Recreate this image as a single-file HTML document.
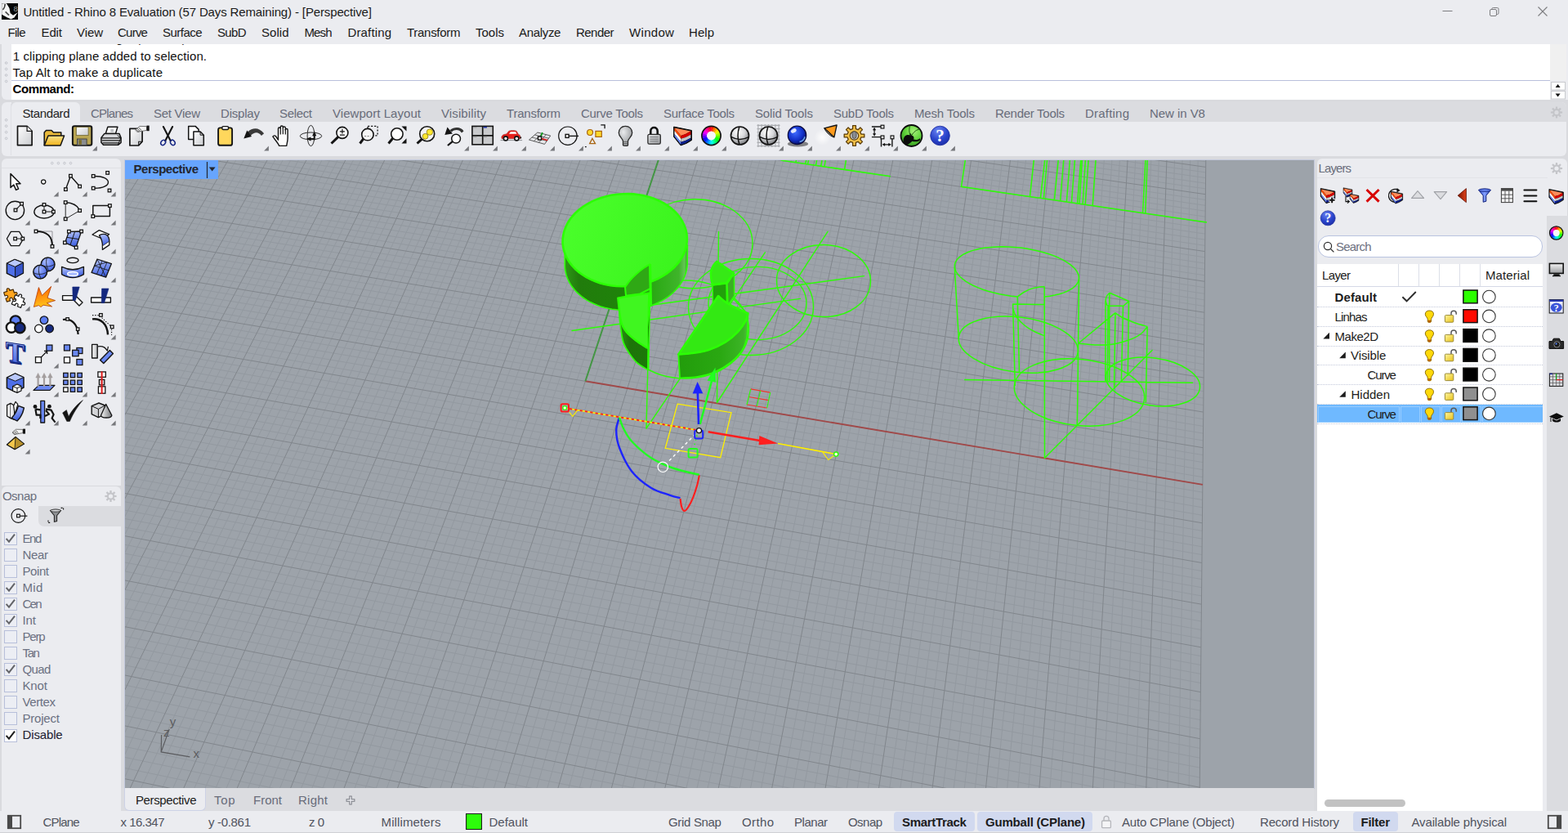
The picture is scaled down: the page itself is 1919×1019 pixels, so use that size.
<!DOCTYPE html>
<html lang="en"><head><meta charset="utf-8"><title>Untitled - Rhino 8 Evaluation (57 Days Remaining) - [Perspective]</title>
<style>
html,body{margin:0;padding:0;}
body{width:1919px;height:1019px;overflow:hidden;background:#d9dade;font-family:"Liberation Sans",sans-serif;}
#app{position:relative;width:1919px;height:1019px;overflow:hidden;background:#d9dade;}
.t{position:absolute;white-space:pre;line-height:20px;height:20px;font-size:15px;color:#1b1b1f;}
.p{position:absolute;}
.light{background:#ebecf0;}
svg{position:absolute;overflow:visible;}
svg text{font-family:"Liberation Sans",sans-serif;}

</style></head>
<body>
<div id="app">
<header>
<div class="p" style="left:0px;top:0px;width:1919px;height:54px;background:#ebecf0;"></div>
<span class="t " style="left:28.40px;top:5.00px;font-size:15px;letter-spacing:-0.135px;color:#1a1a1a;">Untitled - Rhino 8 Evaluation (57 Days Remaining) - [Perspective]</span><nav><span class="t " style="left:9.50px;top:30.00px;font-size:15px;letter-spacing:-0.717px;color:#1a1a1a;">File</span><span class="t " style="left:50.50px;top:30.00px;font-size:15px;letter-spacing:-0.125px;color:#1a1a1a;">Edit</span><span class="t " style="left:94.00px;top:30.00px;font-size:15px;letter-spacing:-0.083px;color:#1a1a1a;">View</span><span class="t " style="left:144.00px;top:30.00px;font-size:15px;letter-spacing:-0.762px;color:#1a1a1a;">Curve</span><span class="t " style="left:199.00px;top:30.00px;font-size:15px;letter-spacing:-0.529px;color:#1a1a1a;">Surface</span><span class="t " style="left:266.00px;top:30.00px;font-size:15px;letter-spacing:-0.667px;color:#1a1a1a;">SubD</span><span class="t " style="left:320.00px;top:30.00px;font-size:15px;letter-spacing:0.031px;color:#1a1a1a;">Solid</span><span class="t " style="left:372.50px;top:30.00px;font-size:15px;letter-spacing:-0.892px;color:#1a1a1a;">Mesh</span><span class="t " style="left:425.50px;top:30.00px;font-size:15px;letter-spacing:0.143px;color:#1a1a1a;">Drafting</span><span class="t " style="left:498.00px;top:30.00px;font-size:15px;letter-spacing:-0.287px;color:#1a1a1a;">Transform</span><span class="t " style="left:582.00px;top:30.00px;font-size:15px;letter-spacing:-0.006px;color:#1a1a1a;">Tools</span><span class="t " style="left:635.00px;top:30.00px;font-size:15px;letter-spacing:-0.317px;color:#1a1a1a;">Analyze</span><span class="t " style="left:705.00px;top:30.00px;font-size:15px;letter-spacing:-0.540px;color:#1a1a1a;">Render</span><span class="t " style="left:770.00px;top:30.00px;font-size:15px;letter-spacing:0.320px;color:#1a1a1a;">Window</span><span class="t " style="left:843.00px;top:30.00px;font-size:15px;letter-spacing:0.058px;color:#1a1a1a;">Help</span></nav>
</header>
<section id="cmd">
<div class="p" style="left:2px;top:54px;width:1917px;height:68px;background:#ebecf0;border-radius:0 0 0 6px;"></div>
<div class="p" style="left:14px;top:54px;width:1883px;height:68px;background:#fff;overflow:hidden;"><span class="t" style="left:2px;top:-17px;color:#111;">Other corner or length ( 3Point ):</span></div>
<div class="p" style="left:14px;top:98px;width:1883px;height:1px;background:#b9c0dc;"></div>
<span class="t " style="left:15.80px;top:59.00px;font-size:15px;letter-spacing:0.081px;color:#111;">1 clipping plane added to selection.</span><span class="t " style="left:15.50px;top:79.00px;font-size:15px;letter-spacing:0.163px;color:#111;">Tap Alt to make a duplicate</span><span class="t " style="left:15.50px;top:99.00px;font-size:15px;letter-spacing:-0.400px;color:#000;font-weight:700;">Command:</span></section>
<section id="toolbar">
<div class="p" style="left:2px;top:125px;width:1915px;height:66px;background:#ebecf0;border-radius:6px;"></div>
<div class="p" style="left:14px;top:125px;width:1903px;height:24px;background:#dbdce0;border-radius:0 6px 0 0;"></div>
<div class="p" style="left:14px;top:125px;width:84px;height:25px;background:#ebecf0;border-radius:6px 6px 0 0;"></div>
<span class="t " style="left:27.50px;top:129.00px;font-size:15px;letter-spacing:-0.414px;color:#1f1f24;">Standard</span><span class="t " style="left:111.00px;top:129.00px;font-size:15px;letter-spacing:-0.783px;color:#686c7a;">CPlanes</span><span class="t " style="left:188.00px;top:129.00px;font-size:15px;letter-spacing:-0.279px;color:#686c7a;">Set View</span><span class="t " style="left:270.00px;top:129.00px;font-size:15px;letter-spacing:-0.200px;color:#686c7a;">Display</span><span class="t " style="left:342.00px;top:129.00px;font-size:15px;letter-spacing:-0.340px;color:#686c7a;">Select</span><span class="t " style="left:407.00px;top:129.00px;font-size:15px;letter-spacing:0.048px;color:#686c7a;">Viewport Layout</span><span class="t " style="left:540.00px;top:129.00px;font-size:15px;letter-spacing:0.119px;color:#686c7a;">Visibility</span><span class="t " style="left:620.00px;top:129.00px;font-size:15px;letter-spacing:-0.225px;color:#686c7a;">Transform</span><span class="t " style="left:711.00px;top:129.00px;font-size:15px;letter-spacing:-0.290px;color:#686c7a;">Curve Tools</span><span class="t " style="left:812.00px;top:129.00px;font-size:15px;letter-spacing:-0.300px;color:#686c7a;">Surface Tools</span><span class="t " style="left:924.00px;top:129.00px;font-size:15px;letter-spacing:-0.130px;color:#686c7a;">Solid Tools</span><span class="t " style="left:1020.00px;top:129.00px;font-size:15px;letter-spacing:-0.269px;color:#686c7a;">SubD Tools</span><span class="t " style="left:1119.00px;top:129.00px;font-size:15px;letter-spacing:-0.178px;color:#686c7a;">Mesh Tools</span><span class="t " style="left:1218.00px;top:129.00px;font-size:15px;letter-spacing:-0.284px;color:#686c7a;">Render Tools</span><span class="t " style="left:1328.00px;top:129.00px;font-size:15px;letter-spacing:0.214px;color:#686c7a;">Drafting</span><span class="t " style="left:1407.00px;top:129.00px;font-size:15px;letter-spacing:-0.050px;color:#686c7a;">New in V8</span><svg style="left:0;top:150px" width="1200" height="40" viewBox="0 150 1200 40"><defs><linearGradient id="gpaper" x1="0" y1="0" x2="1" y2="1"><stop offset="0" stop-color="#fff"/><stop offset="1" stop-color="#c9cbcf"/></linearGradient><linearGradient id="gfold" x1="0" y1="0" x2="0" y2="1"><stop offset="0" stop-color="#fbe48c"/><stop offset="1" stop-color="#f0b21a"/></linearGradient><radialGradient id="gbulb" cx=".35" cy=".3" r=".8"><stop offset="0" stop-color="#e9eaec"/><stop offset="1" stop-color="#8f9295"/></radialGradient><linearGradient id="glock" x1="0" y1="0" x2="1" y2="1"><stop offset="0" stop-color="#e4e5e7"/><stop offset="1" stop-color="#9b9da1"/></linearGradient><radialGradient id="gsph" cx=".4" cy=".3" r=".75"><stop offset="0" stop-color="#fff"/><stop offset=".5" stop-color="#d6d7da"/><stop offset="1" stop-color="#6f7175"/></radialGradient><radialGradient id="gblue" cx=".4" cy=".35" r=".7"><stop offset="0" stop-color="#3f6bff"/><stop offset=".6" stop-color="#1230c8"/><stop offset="1" stop-color="#050a58"/></radialGradient><radialGradient id="gglow" cx=".5" cy=".5" r=".5"><stop offset="0" stop-color="#fff" stop-opacity=".9"/><stop offset="1" stop-color="#fff" stop-opacity="0"/></radialGradient><radialGradient id="ggreen" cx=".6" cy=".3" r=".8"><stop offset="0" stop-color="#a6f07a"/><stop offset=".5" stop-color="#5fd23a"/><stop offset="1" stop-color="#2a8a1a"/></radialGradient><radialGradient id="ghelp" cx=".4" cy=".25" r=".85"><stop offset="0" stop-color="#6d86f2"/><stop offset=".55" stop-color="#2a44cc"/><stop offset="1" stop-color="#1a2aa0"/></radialGradient></defs><g transform="translate(30.5 166)"><path d="M-9 -11.6H2.6L8.6 -5.6V11.6H-9Z" fill="url(#gpaper)" stroke="#141414" stroke-width="1.7" stroke-linejoin="round"/><path d="M2.6 -11.6V-5.6H8.6" fill="#fff" stroke="#141414" stroke-width="1.2"/></g>
<g transform="translate(65.5 166)"><g transform="translate(0.5 1.5)"><path d="M-11.8 10.5V-5.5L-9.5 -8H-3L-0.5 -5.5H8.8V-1.5" fill="#e8b93a" stroke="#141414" stroke-width="1.5" stroke-linejoin="round"/><path d="M-11.8 10.5L-7 -1.5H12.6L8 10.5Z" fill="url(#gfold)" stroke="#141414" stroke-width="1.5" stroke-linejoin="round"/></g></g>
<g transform="translate(100.5 166)"><rect x="-11.6" y="-11.8" width="23.4" height="23.6" rx="2.3" fill="#b9a552" stroke="#141414" stroke-width="2"/><rect x="-7.2" y="-10.6" width="14.8" height="10.2" fill="url(#gpaper)" stroke="#6d6434" stroke-width=".8"/><rect x="-6" y="4" width="11.6" height="7.6" fill="#8a8d90" stroke="#3a3a3a" stroke-width=".9"/><rect x="-4.2" y="5.2" width="3.6" height="5.6" fill="#80702c"/><path d="M12.6 18.4H18.4V12.6Z" fill="#77787c"/></g>
<g transform="translate(135.5 166)"><path d="M-6.2 -2.6L-3.6 -10.8H8.4L6 -2.6Z" fill="#fff" stroke="#141414" stroke-width="1.5" stroke-linejoin="round"/><rect x="-0.2" y="-8" width="3.8" height="3.6" fill="#bfc2c6"/><path d="M-11.6 2.5L-7.6 -2.6H10.4L12.6 2.5V8.3L9 11.3H-9L-11.6 8.3Z" fill="#d9dadd" stroke="#141414" stroke-width="1.5" stroke-linejoin="round"/><path d="M-11.4 2.8H12.4M-10.6 5.9H11.8M-10 8.8H10.8" stroke="#141414" stroke-width="1.2" fill="none"/><path d="M8.2 -0.4L12.4 2.6L9 11" stroke="#141414" stroke-width="1" fill="none"/></g>
<g transform="translate(170.5 166)"><path d="M-11.6 -8.6H3.6V7.2L-0.8 12H-11.6Z" fill="url(#gpaper)" stroke="#141414" stroke-width="1.7" stroke-linejoin="round"/><path d="M3.4 7.2H-0.8V11.8" fill="none" stroke="#141414" stroke-width="1.1"/><path d="M-5 -7L0.5 -11.6L9 -11.4V-6.6L2 -5.4L-2.5 -4.6Z" fill="#f4f4f4" stroke="#555" stroke-width=".8"/><path d="M-4 -7.4L-0.5 -4.6M-2.4 -8.6L1.2 -5.2M-0.8 -9.8L2.8 -6.4" stroke="#444" stroke-width=".9"/><rect x="9" y="-12.4" width="3.2" height="6.6" fill="#141414"/></g>
<g transform="translate(205.5 166)"><path d="M-5.6 -11L3.4 6.4M5.6 -11L-3.4 6.4" stroke="#141414" stroke-width="2.1" stroke-linecap="round"/><ellipse cx="-5.8" cy="8.4" rx="2.6" ry="3.4" transform="rotate(38 -5.8 8.4)" fill="none" stroke="#1a2a86" stroke-width="1.5"/><ellipse cx="5.8" cy="8.4" rx="2.6" ry="3.4" transform="rotate(-38 5.8 8.4)" fill="none" stroke="#1a2a86" stroke-width="1.5"/></g>
<g transform="translate(240.5 166)"><path d="M-9.8 -11.6H-1.4L2.6 -7.6V4.6H-9.8Z" fill="#fff" stroke="#141414" stroke-width="1.5" stroke-linejoin="round"/><path d="M-3.6 -5H4.6L8.8 -0.8V11.8H-3.6Z" fill="url(#gpaper)" stroke="#141414" stroke-width="1.5" stroke-linejoin="round"/><path d="M4.6 -5V-0.8H8.8" fill="none" stroke="#141414" stroke-width="1"/></g>
<g transform="translate(275.5 166)"><rect x="-8.4" y="-9.6" width="17" height="21.4" rx="2.4" fill="#ffd75c" stroke="#141414" stroke-width="1.9"/><rect x="-3.6" y="-11.4" width="7.6" height="3.9" rx="1.2" fill="#fff" stroke="#141414" stroke-width="1.4"/></g>
<g transform="translate(310.5 166)"><g transform="translate(0 -1)"><path d="M-7.6 -3.5Q3 -12.6 12.6 -1.8L9.4 0.9Q3.6 -6.4 -3.8 0.9Z" fill="#3a3a3a"/><path d="M-12.2 4.6L-8.2 -5.4L-2.5 2.1Z" fill="#141414"/></g><path d="M12.6 18.4H18.4V12.6Z" fill="#77787c"/></g>
<g transform="translate(345.5 166)"><path d="M-11.6 1.2C-10.6 -0.6 -8.8 -0.4 -7.8 1L-5 5.2V-8.4C-5 -10.6 -2.2 -10.6 -2.2 -8.4V-10.4C-2.2 -12.6 0.8 -12.6 0.8 -10.4V-9.4C0.8 -11.6 3.8 -11.6 3.8 -9.4V-7C3.8 -9 6.6 -9 6.6 -7V2.4C6.6 6 6 8 5.2 12.4H-3.8C-5.4 8.6 -9 4.8 -11.6 1.2Z" fill="#fdfdfd" stroke="#141414" stroke-width="1.4" stroke-linejoin="round"/><path d="M-2.2 -8V-1.6M0.8 -9.4V-1.8M3.8 -8V-1.4" stroke="#141414" stroke-width="1.2" fill="none"/></g>
<g transform="translate(380.5 166)"><ellipse cx="0" cy="0.4" rx="13.2" ry="4.4" fill="none" stroke="#2a2a2a" stroke-width="1"/><ellipse cx="0" cy="0" rx="4.4" ry="12.6" fill="none" stroke="#2a2a2a" stroke-width="1"/><path d="M4.2 -5.4L6.8 0.2H5.2V5.2H3.2V0.2H1.6Z" fill="#141414"/><path d="M-5.6 3.8L0 1.4V3H4.4V4.8H0V6.4Z" fill="#141414"/></g>
<g transform="translate(415.5 166)"><path d="M-1.4999999999999996 1.2999999999999994L-10 9.5" stroke="#141414" stroke-width="3" stroke-linecap="butt"/><circle cx="3.4" cy="-3.6" r="7" fill="#fff" stroke="#141414" stroke-width="1.6"/><path d="M0.4 -5.2H6.4M3.4 -8.2V-2.4M0.4 -0.8H6.4" stroke="#141414" stroke-width="1.2"/></g>
<g transform="translate(450.5 166)"><rect x="-0.4" y="-11.6" width="12" height="11.4" fill="none" stroke="#141414" stroke-width="1.3" stroke-dasharray="2.2 1.8"/><path d="M-5.64 3.64L-10 9.5" stroke="#141414" stroke-width="3" stroke-linecap="butt"/><circle cx="-0.6" cy="-1.4" r="7.2" fill="#f6f6f6" stroke="#141414" stroke-width="1.6"/><path d="M-4.4 0.6H3" stroke="#777" stroke-width="1" stroke-dasharray="2 1.5"/></g>
<g transform="translate(485.5 166)"><path d="M-4.64 3.04L-10 9.5" stroke="#141414" stroke-width="3" stroke-linecap="butt"/><circle cx="0.4" cy="-2" r="7.2" fill="#fff" stroke="#141414" stroke-width="1.6"/><path d="M6 -11.6H12V-5.6Z M12 3.2V9.4H6Z" fill="#141414"/><path d="M-12.6 -4.6L-12.6 -10.6L-7 -10.6" fill="none" stroke="#141414" stroke-width="0"/></g>
<g transform="translate(520.5 166)"><path d="M-4.1 4.1L-10 9.5" stroke="#141414" stroke-width="3" stroke-linecap="butt"/><circle cx="2.2" cy="-2.2" r="9" fill="#f3f3f3" stroke="#141414" stroke-width="1.6"/><circle cx="5.4" cy="-4.4" r="3.7" fill="#ffe92e" stroke="#8a7a12" stroke-width=".8"/><circle cx="0" cy="0.8" r="3.4" fill="#ffe92e" stroke="#8a7a12" stroke-width=".8"/></g>
<g transform="translate(555.5 166)"><path d="M-5 -6.8C1 -11.8 9.5 -10.6 12 -5.6L9.4 -3.6C7 -7.6 1 -8.2 -2.6 -4.6Z" fill="#333"/><path d="M-11.2 -1L-8 -10.6L-1.6 -2.4Z" fill="#141414"/><path d="M-1.4 6.8L-7.6 12" stroke="#141414" stroke-width="2.2"/><circle cx="2.6" cy="3.6" r="5.4" fill="#fff" stroke="#141414" stroke-width="1.5"/><path d="M12.6 18.4H18.4V12.6Z" fill="#77787c"/></g>
<g transform="translate(590.5 166)"><rect x="-12.6" y="-11.6" width="25.4" height="22.4" fill="#c9cacc" stroke="#141414" stroke-width="1.6"/><path d="M0.2 -11.6V10.8M-12.6 -0.2H12.8" stroke="#141414" stroke-width="1.7"/><path d="M1.2 -10.2H5.4" stroke="#1226a8" stroke-width="1.4"/><path d="M-11.2 -10.2H-7M-11.2 1.2H-7M1.2 1.2H5.4" stroke="#8a8a8a" stroke-width="1"/><path d="M12.6 18.4H18.4V12.6Z" fill="#77787c"/></g>
<g transform="translate(625.5 166)"><path d="M-13 5.6H13.6" stroke="#8f9094" stroke-width="1"/><path d="M-11.6 2.6C-11.8 -0.4 -9.4 -1.6 -5.6 -2L-2.8 -5.6C-1.8 -6.6 5.6 -6.6 6.6 -5.6L9 -1.6C10.8 -1.4 11.2 0.2 11.2 2.4V3.6H-11.4Z" fill="#e5201c" stroke="#9c1410" stroke-width=".6"/><path d="M-2.6 -2.2L-0.6 -4.8H5.4L7 -2.2Z" fill="#fff"/><circle cx="-6.6" cy="3.4" r="2.5" fill="#fff" stroke="#141414" stroke-width="1.6"/><circle cx="6.8" cy="3.4" r="2.5" fill="#fff" stroke="#141414" stroke-width="1.6"/><rect x="11" y="1.4" width="1.6" height="2" fill="#141414"/><path d="M12.6 18.4H18.4V12.6Z" fill="#77787c"/></g>
<g transform="translate(660.5 166)"><g transform="translate(0 2)"><path d="M-13 3L-2.6 -6L13.2 -2L6 8.4Z" fill="#e6e7ea" stroke="#4a4a4a" stroke-width=".9"/><path d="M-9.6 0L8.8 4.4M-6 -3L11 1.2M-7.4 5L3 -4.6M-1.4 6.6L8 -3.4" stroke="#4a4a4a" stroke-width=".8" fill="none"/><path d="M0.4 1L3.4 -5.8" stroke="#0e9e1c" stroke-width="1.8"/><path d="M0.4 1L9.6 3.6" stroke="#d81e1e" stroke-width="1.8"/><rect x="-2" y="-1" width="4" height="4" fill="#fff" stroke="#141414" stroke-width="1.4"/></g><path d="M12.6 18.4H18.4V12.6Z" fill="#77787c"/></g>
<g transform="translate(695.5 166)"><circle cx="-0.6" cy="0.2" r="11.2" fill="none" stroke="#141414" stroke-width="1.2"/><path d="M0.6 0.4H12.6" stroke="#141414" stroke-width="1.4"/><rect x="-3.4" y="-1.6" width="4" height="4" fill="#fff" stroke="#141414" stroke-width="1.4"/><path d="M12.6 18.4H18.4V12.6Z" fill="#77787c"/></g>
<g transform="translate(730.5 166)"><circle cx="-8.4" cy="-4" r="3.5" fill="#ffd92a" stroke="#a86412" stroke-width="1.2"/><rect x="-1.6" y="-5.6" width="7.4" height="7" fill="#ffd92a" stroke="#a86412" stroke-width="1.2"/><path d="M-8.8 9.6L-5.6 3.4L-2 9.6Z" fill="none" stroke="#a86412" stroke-width="1.3"/><path d="M4.8 -13.2H9.6V-8.8" fill="none" stroke="#141414" stroke-width="1.3"/><path d="M-14.6 13.6H-12.8" stroke="#141414" stroke-width="1.3"/><path d="M12.6 18.4H18.4V12.6Z" fill="#77787c"/></g>
<g transform="translate(765.5 166)"><path d="M-3 11.4V6.8C-3 3.6 -8.2 1 -8.2 -3.6C-8.2 -8.4 -4.6 -11.6 0 -11.6C4.6 -11.6 8.2 -8.4 8.2 -3.6C8.2 1 3 3.6 3 6.8V11.4C3 12.6 -3 12.6 -3 11.4Z" fill="url(#gbulb)" stroke="#2a2a2a" stroke-width="1.3"/><path d="M-2.8 7.4H2.8M-2.8 9.6H2.8" stroke="#555" stroke-width=".8"/><path d="M12.6 18.4H18.4V12.6Z" fill="#77787c"/></g>
<g transform="translate(800.5 166)"><path d="M-4.2 -1V-5.6C-4.2 -11.4 4.2 -11.4 4.2 -5.6V-1" fill="none" stroke="#141414" stroke-width="2.6"/><rect x="-7.6" y="-1.6" width="15.4" height="11.8" rx="1.6" fill="url(#glock)" stroke="#2a2a2a" stroke-width="1.3"/><path d="M-5 1.6H5M-5 4.2H5M-5 6.8H5" stroke="#77797c" stroke-width="1"/><path d="M12.6 18.4H18.4V12.6Z" fill="#77787c"/></g>
<g transform="translate(835.5 166)"><g transform="scale(1.0)"><path d="M-10.9 -10.9L11 -6.5V5.5Q5 10 -2.4 11.9L-10.9 1.3Z" fill="#0b0b0b" stroke="#0b0b0b" stroke-width="1" stroke-linejoin="round"/><path d="M-10 -9.5L9.9 -5.4Q4 -1.6 -2.1 -0.1Z" fill="#ff8c5a"/><path d="M-10 -9.5L-2.1 -0.1V3.8L-10 -6.1Z" fill="#ff4a00"/><path d="M-10 -6.1L-2.1 3.8V7.7L-10 -1.9Z" fill="#fff"/><path d="M-10 -1.9L-2.1 7.7V11L-10 0.8Z" fill="#6a8aff"/><path d="M-2.1 -0.1Q4 -1.6 9.9 -5.4V-1.2Q4 2.4 -2.1 3.8Z" fill="#d60000"/><path d="M-2.1 3.8Q4 2.4 9.9 -1.2V2.7Q4 6.2 -2.1 7.7Z" fill="#c2c3c5"/><path d="M-2.1 7.7Q4 6.2 9.9 2.7V5Q4 9.4 -2.1 11Z" fill="#0c1f8e"/></g><path d="M12.6 18.4H18.4V12.6Z" fill="#77787c"/></g>
<g transform="translate(870.5 166)"><path d="M-0.23 -11.40A11.4 11.4 0 0 1 3.17 -10.95L1.45 -4.99A5.2 5.2 0 0 0 -0.10 -5.20Z" fill="#ff1f00"/><path d="M2.73 -11.07A11.4 11.4 0 0 1 5.90 -9.76L2.69 -4.45A5.2 5.2 0 0 0 1.25 -5.05Z" fill="#ff5f00"/><path d="M5.50 -9.98A11.4 11.4 0 0 1 8.22 -7.90L3.75 -3.60A5.2 5.2 0 0 0 2.51 -4.55Z" fill="#ff9f00"/><path d="M7.90 -8.22A11.4 11.4 0 0 1 9.98 -5.50L4.55 -2.51A5.2 5.2 0 0 0 3.60 -3.75Z" fill="#ffdf00"/><path d="M9.76 -5.90A11.4 11.4 0 0 1 11.07 -2.73L5.05 -1.25A5.2 5.2 0 0 0 4.45 -2.69Z" fill="#dfff00"/><path d="M10.95 -3.17A11.4 11.4 0 0 1 11.40 0.23L5.20 0.10A5.2 5.2 0 0 0 4.99 -1.45Z" fill="#9fff00"/><path d="M11.40 -0.23A11.4 11.4 0 0 1 10.95 3.17L4.99 1.45A5.2 5.2 0 0 0 5.20 -0.10Z" fill="#5fff00"/><path d="M11.07 2.73A11.4 11.4 0 0 1 9.76 5.90L4.45 2.69A5.2 5.2 0 0 0 5.05 1.25Z" fill="#1fff00"/><path d="M9.98 5.50A11.4 11.4 0 0 1 7.90 8.22L3.60 3.75A5.2 5.2 0 0 0 4.55 2.51Z" fill="#00ff1f"/><path d="M8.22 7.90A11.4 11.4 0 0 1 5.50 9.98L2.51 4.55A5.2 5.2 0 0 0 3.75 3.60Z" fill="#00ff5f"/><path d="M5.90 9.76A11.4 11.4 0 0 1 2.73 11.07L1.25 5.05A5.2 5.2 0 0 0 2.69 4.45Z" fill="#00ff9f"/><path d="M3.17 10.95A11.4 11.4 0 0 1 -0.23 11.40L-0.10 5.20A5.2 5.2 0 0 0 1.45 4.99Z" fill="#00ffdf"/><path d="M0.23 11.40A11.4 11.4 0 0 1 -3.17 10.95L-1.45 4.99A5.2 5.2 0 0 0 0.10 5.20Z" fill="#00dfff"/><path d="M-2.73 11.07A11.4 11.4 0 0 1 -5.90 9.76L-2.69 4.45A5.2 5.2 0 0 0 -1.25 5.05Z" fill="#009fff"/><path d="M-5.50 9.98A11.4 11.4 0 0 1 -8.22 7.90L-3.75 3.60A5.2 5.2 0 0 0 -2.51 4.55Z" fill="#005fff"/><path d="M-7.90 8.22A11.4 11.4 0 0 1 -9.98 5.50L-4.55 2.51A5.2 5.2 0 0 0 -3.60 3.75Z" fill="#001fff"/><path d="M-9.76 5.90A11.4 11.4 0 0 1 -11.07 2.73L-5.05 1.25A5.2 5.2 0 0 0 -4.45 2.69Z" fill="#1f00ff"/><path d="M-10.95 3.17A11.4 11.4 0 0 1 -11.40 -0.23L-5.20 -0.10A5.2 5.2 0 0 0 -4.99 1.45Z" fill="#5f00ff"/><path d="M-11.40 0.23A11.4 11.4 0 0 1 -10.95 -3.17L-4.99 -1.45A5.2 5.2 0 0 0 -5.20 0.10Z" fill="#9f00ff"/><path d="M-11.07 -2.73A11.4 11.4 0 0 1 -9.76 -5.90L-4.45 -2.69A5.2 5.2 0 0 0 -5.05 -1.25Z" fill="#df00ff"/><path d="M-9.98 -5.50A11.4 11.4 0 0 1 -7.90 -8.22L-3.60 -3.75A5.2 5.2 0 0 0 -4.55 -2.51Z" fill="#ff00df"/><path d="M-8.22 -7.90A11.4 11.4 0 0 1 -5.50 -9.98L-2.51 -4.55A5.2 5.2 0 0 0 -3.75 -3.60Z" fill="#ff009f"/><path d="M-5.90 -9.76A11.4 11.4 0 0 1 -2.73 -11.07L-1.25 -5.05A5.2 5.2 0 0 0 -2.69 -4.45Z" fill="#ff005f"/><path d="M-3.17 -10.95A11.4 11.4 0 0 1 0.23 -11.40L0.10 -5.20A5.2 5.2 0 0 0 -1.45 -4.99Z" fill="#ff001f"/><circle r="11.6" fill="none" stroke="#141414" stroke-width="1.7"/><circle r="5.4" fill="#f7f7f7"/><path d="M12.6 18.4H18.4V12.6Z" fill="#77787c"/></g>
<g transform="translate(905.5 166)"><circle r="11" fill="url(#gsph)" stroke="#141414" stroke-width="1.7"/><path d="M-0.6 -11C-3 -4 -3 4 -0.4 11M-10.8 1.4C-4 5.2 4 5.2 10.8 1.6" fill="none" stroke="#141414" stroke-width="1.5"/></g>
<g transform="translate(940.5 166)"><path d="M-14 -12.6H14M-14 -8.4H14M-14 -4.2H14M-14 0H14M-14 4.2H14M-14 8.4H14M-14 12.6H14M-12.6 -14V14M-8.4 -14V14M-4.2 -14V14M0 -14V14M4.2 -14V14M8.4 -14V14M12.6 -14V14" stroke="#a9abaf" stroke-width="1.1"/><circle r="11" fill="url(#gsph)" stroke="#141414" stroke-width="1.7"/><path d="M-0.6 -11C-3 -4 -3 4 -0.4 11M-10.8 1.4C-4 5.2 4 5.2 10.8 1.6" fill="none" stroke="#141414" stroke-width="1.5"/><path d="M12.6 18.4H18.4V12.6Z" fill="#77787c"/></g>
<g transform="translate(975.5 166)"><ellipse cx="1" cy="10" rx="12.6" ry="3.6" fill="#2a2a2a" opacity=".55"/><circle cx="0" cy="-0.6" r="11.2" fill="url(#gblue)" stroke="#0a0a3a" stroke-width="1.2"/><ellipse cx="-4.2" cy="-6" rx="3.6" ry="2.4" fill="#fff" opacity=".85" transform="rotate(-30 -4.2 -6)"/><path d="M3 7.6C6.6 6.6 9 3.8 9.6 1.2" stroke="#7ec0ff" stroke-width="1.6" fill="none" opacity=".8"/><path d="M12.6 18.4H18.4V12.6Z" fill="#77787c"/></g>
<g transform="translate(1010.5 166)"><circle cx="-4" cy="2" r="10" fill="url(#gglow)"/><path d="M-1.6 -9.2L13.6 -13L10.4 1.8Z" fill="#ff9a1c" stroke="#141414" stroke-width="1.3" stroke-linejoin="round"/><path d="M-1.6 -9.2C1 -5.6 5.6 -1 10.4 1.8C8.6 2.4 0.2 -3.4 -1.6 -9.2Z" fill="#fff3d6" stroke="#141414" stroke-width="1"/><path d="M12.6 18.4H18.4V12.6Z" fill="#77787c"/></g>
<g transform="translate(1045.5 166)"><path d="M8.4 -1.9L12.3 -1.9L12.3 1.9L8.4 1.9L7.3 4.6L10.0 7.4L7.4 10.0L4.6 7.3L1.9 8.4L1.9 12.3L-1.9 12.3L-1.9 8.4L-4.6 7.3L-7.4 10.0L-10.0 7.4L-7.3 4.6L-8.4 1.9L-12.3 1.9L-12.3 -1.9L-8.4 -1.9L-7.3 -4.6L-10.0 -7.4L-7.4 -10.0L-4.6 -7.3L-1.9 -8.4L-1.9 -12.3L1.9 -12.3L1.9 -8.4L4.6 -7.3L7.4 -10.0L10.0 -7.4L7.3 -4.6Z" fill="#f3c24a" stroke="#5a3c08" stroke-width="1.3" stroke-linejoin="round"/><circle r="5.2" fill="#d9dadc" stroke="#5a3c08" stroke-width="1.2"/><rect x="-2.6" y="-5.2" width="5.2" height="8.6" rx="2.4" fill="#8a8c90" stroke="#3a3a3a" stroke-width=".8"/><path d="M12.6 18.4H18.4V12.6Z" fill="#77787c"/></g>
<g transform="translate(1080.5 166)"><path d="M-13.6 -11H-2M-13.6 1.6H-2M-2 2.8V13.6M11.4 2.8V13.6" stroke="#141414" stroke-width="1.4"/><path d="M-10.4 -8V-1.4M-11.8 -6.6L-10.4 -9L-9 -6.6M-11.8 -2.8L-10.4 -0.4L-9 -2.8M1 10.8H8.4M2.6 9.4L0.2 10.8L2.6 12.2M6.8 9.4L9.2 10.8L6.8 12.2" stroke="#141414" stroke-width="1.2" fill="none"/><rect x="-2.4" y="-12.8" width="3.8" height="3.8" fill="#fff" stroke="#141414" stroke-width="1.2"/><rect x="-2.4" y="0" width="3.8" height="3.8" fill="#fff" stroke="#141414" stroke-width="1.2"/><rect x="9.6" y="0" width="3.8" height="3.8" fill="#fff" stroke="#141414" stroke-width="1.2"/><path d="M12.6 18.4H18.4V12.6Z" fill="#77787c"/></g>
<g transform="translate(1115.5 166)"><circle r="13" fill="url(#ggreen)" stroke="#0c0c0c" stroke-width="1.8"/><path d="M-9.6 3.4C-8 -1 -5 -1.6 -2.4 -0.6L-1.6 -3.6L0.6 -0.2C3 0.6 3.6 2.6 2.6 4.6C5.6 5.6 8.6 5 10.4 3L10.8 5.2C8 7.6 4 7.8 1 6.8C-1.6 9 -3 10.6 -6.6 11.6C-9.6 9.6 -10.6 6.6 -9.6 3.4Z" fill="#0c0c0c"/><path d="M-2 -12.6C-3.4 -6 -2.4 -2 -1 0M0.4 -0.6C3 -5 6.4 -7.6 10.2 -7.8" stroke="#1e5a12" stroke-width="1" fill="none"/><path d="M12.6 18.4H18.4V12.6Z" fill="#77787c"/></g>
<g transform="translate(1150.5 166)"><circle r="11.8" fill="url(#ghelp)" stroke="#1a2a9a" stroke-width=".8"/><text x="0" y="7.4" text-anchor="middle" style="font-family:Liberation Serif,serif" font-weight="700" font-size="21px" fill="#fff">?</text><path d="M12.6 18.4H18.4V12.6Z" fill="#77787c"/></g>
</svg>
</section>
<aside id="palette">
<div class="p" style="left:2px;top:194px;width:146px;height:400px;background:#ebecf0;border-radius:6px 6px 0 0;"></div>
<div class="p" style="left:2px;top:205px;width:146px;height:1px;background:#dfe0e4;"></div>
<svg style="left:0;top:206px" width="150" height="360" viewBox="0 206 150 360"><defs><linearGradient id="gbl" x1="0" y1="0" x2=".3" y2="1"><stop offset="0" stop-color="#bccbff"/><stop offset="1" stop-color="#3f60e0"/></linearGradient><radialGradient id="gbs" cx=".35" cy=".3" r=".8"><stop offset="0" stop-color="#a9bcff"/><stop offset="1" stop-color="#3a5ade"/></radialGradient><linearGradient id="gor" x1="0" y1="0" x2=".2" y2="1"><stop offset="0" stop-color="#ff5a00"/><stop offset="1" stop-color="#ffc21a"/></linearGradient><linearGradient id="gwh" x1="0" y1="0" x2="1" y2="0"><stop offset="0" stop-color="#fff"/><stop offset="1" stop-color="#b9babd"/></linearGradient><linearGradient id="gsph2" x1="0" y1="0" x2="1" y2="0"><stop offset="0" stop-color="#f2f2f2"/><stop offset="1" stop-color="#77797c"/></linearGradient></defs><g transform="translate(19 223)"><path d="M-6 -10.4V6.4L-2.2 3L0.6 9.4L3.6 8L0.8 1.8H6Z" fill="#fff" stroke="#141414" stroke-width="1.5" stroke-linejoin="round" /></g>
<g transform="translate(54 223)"><circle cx="-0.8" cy="-0.6" r="2.6" fill="#fff" stroke="#141414" stroke-width="1.3"/><path d="M11.6 17.6H17.6V11.6Z" fill="#77787c"/></g>
<g transform="translate(89 223)"><path d="M-8.6 8.6L-2.6 -7.8L8.6 5" fill="none" stroke="#141414" stroke-width="1.4" stroke-linejoin="round" /><rect x="-4.4" y="-9.6" width="3.6" height="3.6" fill="#fff" stroke="#141414" stroke-width="1.3"/><rect x="-10.4" y="6.8" width="3.6" height="3.6" fill="#fff" stroke="#141414" stroke-width="1.3"/><rect x="6.8" y="3.2" width="3.6" height="3.6" fill="#fff" stroke="#141414" stroke-width="1.3"/><path d="M11.6 17.6H17.6V11.6Z" fill="#77787c"/></g>
<g transform="translate(124 223)"><path d="M-9.7 -7.5C14.5 -8 14.5 8 -9.7 7.3" fill="none" stroke="#141414" stroke-width="1.4" stroke-linejoin="round" /><rect x="-11.6" y="-9.4" width="3.6" height="3.6" fill="#fff" stroke="#141414" stroke-width="1.3"/><rect x="5.8" y="-13.4" width="3.6" height="3.6" fill="#fff" stroke="#141414" stroke-width="1.3"/><rect x="-11.6" y="5.4" width="3.6" height="3.6" fill="#fff" stroke="#141414" stroke-width="1.3"/><rect x="8.2" y="8.2" width="3.6" height="3.6" fill="#fff" stroke="#141414" stroke-width="1.3"/><path d="M11.6 17.6H17.6V11.6Z" fill="#77787c"/></g>
<g transform="translate(19 258)"><circle cx="-0.6" cy="-0.6" r="11.2" fill="none" stroke="#141414" stroke-width="1.4"/><path d="M0 -1L7.4 -8.6" fill="none" stroke="#141414" stroke-width="1.1" stroke-linejoin="round" /><rect x="-1.8" y="-2.8" width="3.6" height="3.6" fill="#fff" stroke="#141414" stroke-width="1.3"/><rect x="5.8" y="-10.6" width="3.6" height="3.6" fill="#fff" stroke="#141414" stroke-width="1.3"/><path d="M11.6 17.6H17.6V11.6Z" fill="#77787c"/></g>
<g transform="translate(54 258)"><ellipse cx="0" cy="1" rx="12.2" ry="8" fill="none" stroke="#141414" stroke-width="1.4"/><path d="M0 -7.6V1H11.4" fill="none" stroke="#141414" stroke-width="1" stroke-linejoin="round" /><rect x="-1.8" y="-9.4" width="3.6" height="3.6" fill="#fff" stroke="#141414" stroke-width="1.3"/><rect x="-1.8" y="-0.8" width="3.6" height="3.6" fill="#fff" stroke="#141414" stroke-width="1.3"/><rect x="9.6" y="-0.8" width="3.6" height="3.6" fill="#fff" stroke="#141414" stroke-width="1.3"/><path d="M11.6 17.6H17.6V11.6Z" fill="#77787c"/></g>
<g transform="translate(89 258)"><path d="M-8.8 -10.4C1 -9.6 6.6 -5.6 8.6 -0.4" fill="none" stroke="#141414" stroke-width="1.5" stroke-linejoin="round" /><path d="M-8.8 -10.4V9.8L8.6 -0.4" fill="none" stroke="#141414" stroke-width="0.9" stroke-linejoin="round" /><rect x="-10.6" y="-12.2" width="3.6" height="3.6" fill="#fff" stroke="#141414" stroke-width="1.3"/><rect x="6.8" y="-2.2" width="3.6" height="3.6" fill="#fff" stroke="#141414" stroke-width="1.3"/><rect x="-10.6" y="8.0" width="3.6" height="3.6" fill="#fff" stroke="#141414" stroke-width="1.3"/><path d="M11.6 17.6H17.6V11.6Z" fill="#77787c"/></g>
<g transform="translate(124 258)"><path d="M-10.2 -6.4H10.4V6.6H-10.2Z" fill="none" stroke="#141414" stroke-width="1.5" stroke-linejoin="round" /><rect x="8.6" y="-8.2" width="3.6" height="3.6" fill="#fff" stroke="#141414" stroke-width="1.3"/><rect x="-12.0" y="4.8" width="3.6" height="3.6" fill="#fff" stroke="#141414" stroke-width="1.3"/><path d="M11.6 17.6H17.6V11.6Z" fill="#77787c"/></g>
<g transform="translate(19 293)"><path d="M-10.6 -1L-5.6 -9.6H4.6L9.6 -1L4.6 7.6H-5.6Z" fill="none" stroke="#141414" stroke-width="1.3" stroke-linejoin="round" /><path d="M0 -1H9" fill="none" stroke="#141414" stroke-width="1" stroke-linejoin="round" /><rect x="-2.2" y="-2.8" width="3.6" height="3.6" fill="#fff" stroke="#141414" stroke-width="1.3"/><rect x="7.0" y="-2.8" width="3.6" height="3.6" fill="#fff" stroke="#141414" stroke-width="1.3"/><path d="M11.6 17.6H17.6V11.6Z" fill="#77787c"/></g>
<g transform="translate(54 293)"><path d="M-10 -10H10V8.4" fill="none" stroke="#8a8b8e" stroke-width="0.9" stroke-linejoin="round" /><path d="M-10 -10C4 -10 10 -4 10 8.4" fill="none" stroke="#141414" stroke-width="2" stroke-linejoin="round" /><rect x="-11.8" y="-11.8" width="3.6" height="3.6" fill="#fff" stroke="#141414" stroke-width="1.3"/><rect x="8.2" y="6.6" width="3.6" height="3.6" fill="#fff" stroke="#141414" stroke-width="1.3"/><path d="M11.6 17.6H17.6V11.6Z" fill="#77787c"/></g>
<g transform="translate(89 293)"><path d="M-4.6 -9.6L10.6 -10L4 9.6L-9.4 3.8Z" fill="url(#gbl)" stroke="#141414" stroke-width="1.3" stroke-linejoin="round" /><path d="M2.6 -9.6L-3 6.6M-7 -2.6L7.4 -0.4" fill="none" stroke="#141414" stroke-width="1" stroke-linejoin="round" /><rect x="-6.4" y="-11.6" width="3.6" height="3.6" fill="#fff" stroke="#141414" stroke-width="1.3"/><rect x="8.8" y="-11.8" width="3.6" height="3.6" fill="#fff" stroke="#141414" stroke-width="1.3"/><rect x="2.4" y="8.0" width="3.6" height="3.6" fill="#fff" stroke="#141414" stroke-width="1.3"/><rect x="-11.4" y="2.0" width="3.6" height="3.6" fill="#fff" stroke="#141414" stroke-width="1.3"/><path d="M11.6 17.6H17.6V11.6Z" fill="#77787c"/></g>
<g transform="translate(124 293)"><path d="M-11 -6L-2.6 -11.4L9.6 -6.4L2 -0.6Z" fill="#fff" stroke="#141414" stroke-width="1.3" stroke-linejoin="round" /><path d="M-2.6 -5.2C6 -9 9.8 -4 9.8 2.6L1.4 8.2C1.6 2 -0.6 -2.4 -2.6 -5.2Z" fill="url(#gbl)" stroke="#141414" stroke-width="1.3" stroke-linejoin="round" /><path d="M1.4 8.2V12.4L9.8 6.6V2.6" fill="#fff" stroke="#141414" stroke-width="1.3" stroke-linejoin="round" /><path d="M11.6 17.6H17.6V11.6Z" fill="#77787c"/></g>
<g transform="translate(19 328)"><path d="M-10.6 -5.8L-1 -10.6L9.4 -6.6V6L-0.4 11.4L-10.6 6.4Z" fill="#4e6fe8" stroke="#141414" stroke-width="1.5" stroke-linejoin="round" /><path d="M-10.6 -5.8L-1 -10.6L9.4 -6.6L-0.4 -1.6Z" fill="#b9c8fc" stroke="#141414" stroke-width="1" stroke-linejoin="round" /><path d="M-0.4 -1.6L9.4 -6.6V6L-0.4 11.4Z" fill="#3553c8" stroke="#141414" stroke-width="1" stroke-linejoin="round" /><path d="M11.6 17.6H17.6V11.6Z" fill="#77787c"/></g>
<g transform="translate(54 328)"><circle cx="4.6" cy="-4.6" r="8.4" fill="url(#gbs)" stroke="#141414" stroke-width="1.5"/><circle cx="-4.8" cy="4.6" r="8.4" fill="url(#gbs)" stroke="#141414" stroke-width="1.5"/><path d="M-13 5.6C-8 8.4 -1 8 3.6 4.6M-5.6 -3.6C-7.6 2 -6.6 8 -3.6 12.8M-3.6 -3.8C1 -1 8 -1.4 12.8 -4.8M3.4 -12.8C1.6 -7 3 -1 6 3.6" fill="none" stroke="#141414" stroke-width="0.8" stroke-linejoin="round" /><path d="M11.6 17.6H17.6V11.6Z" fill="#77787c"/></g>
<g transform="translate(89 328)"><ellipse cx="0" cy="-9.6" rx="7" ry="3.2" fill="none" stroke="#141414" stroke-width="1.4"/><path d="M-13.4 -1.6C-5 2.6 5 2.6 13.4 -1.6V7.6C5 12.6 -5 12.6 -13.4 7.6Z" fill="url(#gbl)" stroke="#141414" stroke-width="1.4" stroke-linejoin="round" /><ellipse cx="0" cy="7" rx="6.4" ry="2.6" fill="#a9bcff" stroke="#fff" stroke-width="1.5"/><path d="M11.6 17.6H17.6V11.6Z" fill="#77787c"/></g>
<g transform="translate(124 328)"><path d="M-5 -11L12.4 -5.4L5.6 11.2L-12 5.4Z" fill="url(#gbl)" stroke="#141414" stroke-width="1.3" stroke-linejoin="round" /><path d="M-8.4 -2.8L9 2.8M1 -9L-5.6 7.6M7 -7.2L0 9.4M-5 -11L5.6 11.2M-8.4 -2.8L7 -7.2" fill="none" stroke="#141414" stroke-width="0.8" stroke-linejoin="round" /><path d="M11.6 17.6H17.6V11.6Z" fill="#77787c"/></g>
<g transform="translate(19 363)"><path d="M-11 -8.4H-6.6C-8 -12.6 -2 -12.6 -3.4 -8.4H1V-4C5.2 -5.4 5.2 0.6 1 -0.8V3.6H-3.4C-2 -0.6 -8 -0.6 -6.6 3.6H-11V-0.8C-6.8 0.6 -6.8 -5.4 -11 -4Z" fill="#ffa51e" stroke="#4a2c06" stroke-width="1.2" stroke-linejoin="round" transform="rotate(-18) translate(-1 -1)"/><path d="M-2 0H2.4C1 -4.2 7 -4.2 5.6 0H10V4.4C14.2 3 14.2 9 10 7.6V12H5.6C7 7.8 1 7.8 2.4 12H-2V7.6C2.2 9 2.2 3 -2 4.4Z" fill="#fff" stroke="#141414" stroke-width="1.2" stroke-linejoin="round" transform="rotate(22 4 6) translate(-1 0)"/><path d="M11.6 17.6H17.6V11.6Z" fill="#77787c"/></g>
<g transform="translate(54 363)"><path d="M-12.6 12.4L-6.6 -11.4L-2.6 -1.6L8.6 -12.6L4 1.4L13.6 4.6L3.4 7.6L9.6 12L-1 10.2L-4 12.6L-6.6 10.6Z" fill="url(#gor)" stroke="#b23a00" stroke-width="0.8" stroke-linejoin="round" /></g>
<g transform="translate(89 363)"><path d="M-12.4 -1.4H1V4.2H-12.4Z" fill="#fff" stroke="#141414" stroke-width="1.4" stroke-linejoin="round" /><path d="M0.6 3.6L4.6 -0.2L12 7L8 11Z" fill="#fff" stroke="#141414" stroke-width="1.4" stroke-linejoin="round" /><path d="M-0.2 -12H8.2L3.4 4.4H0.2Z" fill="#14287e" stroke="#14287e" stroke-width="0.6" stroke-linejoin="round" /></g>
<g transform="translate(124 363)"><path d="M-12.4 1H11.4V7H-12.4Z" fill="#fff" stroke="#141414" stroke-width="1.4" stroke-linejoin="round" /><path d="M0.6 -10H9L3.6 7.6H0.2Z" fill="#14287e" stroke="#14287e" stroke-width="0.6" stroke-linejoin="round" /></g>
<g transform="translate(19 398)"><circle cx="0" cy="-5.4" r="6.2" fill="#5b7cf0" stroke="#141414" stroke-width="2.4"/><circle cx="-5" cy="2.6" r="6.2" fill="#fff" stroke="#141414" stroke-width="2.4"/><circle cx="5.4" cy="3" r="6.2" fill="#16297e" stroke="#141414" stroke-width="2.4"/><path d="M11.6 17.6H17.6V11.6Z" fill="#77787c"/></g>
<g transform="translate(54 398)"><circle cx="0" cy="-6.4" r="4.8" fill="#5b7cf0" stroke="#141414" stroke-width="1.3"/><circle cx="-6.6" cy="4" r="4.8" fill="#fff" stroke="#141414" stroke-width="1.3"/><circle cx="6.6" cy="4" r="4.8" fill="#16297e" stroke="#141414" stroke-width="1.3"/></g>
<g transform="translate(89 398)"><path d="M-12 -7C-2 -9 6 -2 6.6 11" fill="none" stroke="#141414" stroke-width="2.2" stroke-linejoin="round" /><rect x="-8.1" y="-9.3" width="3.4" height="3.4" fill="#fff" stroke="#141414" stroke-width="1.3"/><rect x="4.5" y="2.9" width="3.4" height="3.4" fill="#fff" stroke="#141414" stroke-width="1.3"/></g>
<g transform="translate(124 398)"><path d="M-11 -7.6C-1 -9 7.4 -2 8 11.4" fill="none" stroke="#141414" stroke-width="2.4" stroke-linejoin="round" /><path d="M-11 -12.4H-2.6L12.6 2V12" fill="none" stroke="#141414" stroke-width="1.1" stroke-linejoin="round" stroke-dasharray="1.4 1.8"/><rect x="-2.4" y="-14.4" width="3.6" height="3.6" fill="#fff" stroke="#141414" stroke-width="1.3"/><rect x="11.4" y="0.0" width="3.6" height="3.6" fill="#fff" stroke="#141414" stroke-width="1.3"/><path d="M11.6 17.6H17.6V11.6Z" fill="#77787c"/></g>
<g transform="translate(19 433)"><text x="0.4" y="11.4" text-anchor="middle" style="font-family:Liberation Serif,serif" font-weight="700" font-size="35px" fill="#14287e" stroke="#14287e" stroke-width="1.6" transform="skewY(9)">T</text><text x="-0.6" y="10.2" text-anchor="middle" style="font-family:Liberation Serif,serif" font-weight="700" font-size="35px" fill="url(#gbl)" stroke="#14287e" stroke-width=".9" transform="skewY(9)">T</text></g>
<g transform="translate(54 433)"><rect x="2.9" y="-10.9" width="7" height="7" fill="#6a88f2" stroke="#141414" stroke-width="1.3"/><rect x="-10.5" y="3.7" width="7" height="7" fill="#fff" stroke="#141414" stroke-width="1.3"/><path d="M-4 4.4L3.4 -3.2M0 -3.6H3.6V0" fill="none" stroke="#141414" stroke-width="1.3" stroke-linejoin="round" /><path d="M11.6 17.6H17.6V11.6Z" fill="#77787c"/></g>
<g transform="translate(89 433)"><rect x="-10.5" y="-11.1" width="7" height="7" fill="#6a88f2" stroke="#141414" stroke-width="1.3"/><rect x="4.9" y="-7.5" width="7" height="7" fill="#6a88f2" stroke="#141414" stroke-width="1.3"/><rect x="-0.3" y="-4.7" width="7.4" height="7.4" fill="#6a88f2" stroke="#141414" stroke-width="1.3"/><rect x="-10.5" y="3.9" width="7" height="7" fill="#fff" stroke="#141414" stroke-width="1.3"/><rect x="4.9" y="6.5" width="7" height="7" fill="#6a88f2" stroke="#141414" stroke-width="1.3"/></g>
<g transform="translate(124 433)"><path d="M-11.4 -11.6H-4.8V5H-11.4Z" fill="url(#gwh)" stroke="#141414" stroke-width="1.4" stroke-linejoin="round" /><path d="M-1.4 7.6L10.4 -4.6L14.4 -0.6L2.8 11.6Z" fill="#6a88f2" stroke="#141414" stroke-width="1.4" stroke-linejoin="round" /><path d="M-4 -9.2C1 -10 5 -8 7 -4.4M4 -8L7.4 -4L8.4 -9.2" fill="none" stroke="#141414" stroke-width="1.2" stroke-linejoin="round" /></g>
<g transform="translate(19 468)"><path d="M-10.6 -6L-0.4 -11L10 -6.4V6L-0.4 11.4L-10.6 6.6Z" fill="#4e6fe8" stroke="#141414" stroke-width="1.5" stroke-linejoin="round" /><path d="M-10.6 -6L-0.4 -11L10 -6.4L-0.4 -1.8Z" fill="#b9c8fc" stroke="#141414" stroke-width="1" stroke-linejoin="round" /><path d="M-3.4 4.6L2 2L7 4.4V10L2 12.4L-3.4 10Z" fill="#fff" stroke="#141414" stroke-width="1.2" stroke-linejoin="round" /><path d="M2 6.8V12.4M-3.4 4.6L2 6.8L7 4.4" fill="none" stroke="#141414" stroke-width="1" stroke-linejoin="round" /><path d="M11.6 17.6H17.6V11.6Z" fill="#77787c"/></g>
<g transform="translate(54 468)"><path d="M-13 9.4L-6.6 3.4H13L7 9.4Z" fill="#6a88f2" stroke="#141414" stroke-width="1.2" stroke-linejoin="round" /><path d="M-7.4 5V-6.6M0 5V-6.6M7.4 5V-6.6" fill="none" stroke="#a39d9d" stroke-width="2.2" stroke-linejoin="round" /><path d="M-10.2 -6L-7.4 -11.6L-4.6 -6ZM-2.8 -6L0 -11.6L2.8 -6ZM4.6 -6L7.4 -11.6L10.2 -6Z" fill="#a39d9d" stroke="#a39d9d" stroke-width="0.5" stroke-linejoin="round" /><path d="M11.6 17.6H17.6V11.6Z" fill="#77787c"/></g>
<g transform="translate(89 468)"><rect x="-11.3" y="-11.7" width="5.4" height="5.4" fill="#6a88f2" stroke="#141414" stroke-width="1.3"/><rect x="-2.7" y="-11.7" width="5.4" height="5.4" fill="#6a88f2" stroke="#141414" stroke-width="1.3"/><rect x="5.9" y="-11.7" width="5.4" height="5.4" fill="#6a88f2" stroke="#141414" stroke-width="1.3"/><rect x="-11.3" y="-2.9" width="5.4" height="5.4" fill="#6a88f2" stroke="#141414" stroke-width="1.3"/><rect x="-2.7" y="-2.9" width="5.4" height="5.4" fill="#6a88f2" stroke="#141414" stroke-width="1.3"/><rect x="5.9" y="-2.9" width="5.4" height="5.4" fill="#6a88f2" stroke="#141414" stroke-width="1.3"/><rect x="-11.3" y="5.9" width="5.4" height="5.4" fill="#fff" stroke="#141414" stroke-width="1.3"/><rect x="-2.7" y="5.9" width="5.4" height="5.4" fill="#6a88f2" stroke="#141414" stroke-width="1.3"/><rect x="5.9" y="5.9" width="5.4" height="5.4" fill="#6a88f2" stroke="#141414" stroke-width="1.3"/><path d="M11.6 17.6H17.6V11.6Z" fill="#77787c"/></g>
<g transform="translate(124 468)"><rect x="-4.1" y="-13.1" width="9.4" height="6.4" fill="#fff" stroke="#141414" stroke-width="1.3"/><rect x="-2.6" y="-3.6" width="6.4" height="6.4" fill="#d9dadd" stroke="#141414" stroke-width="1.3"/><rect x="-3.6" y="4.8" width="8.4" height="8.4" fill="#fff" stroke="#141414" stroke-width="1.3"/><path d="M0.6 -13.6V14" fill="none" stroke="#e01a1a" stroke-width="2" stroke-linejoin="round" /><path d="M11.6 17.6H17.6V11.6Z" fill="#77787c"/></g>
<g transform="translate(19 503)"><path d="M-10.4 -7.4L-6 -9.6V8.6L-10.4 6Z" fill="#fff" stroke="#141414" stroke-width="1.3" stroke-linejoin="round" /><path d="M-6 -9.6L-1.4 -7V10.4L-6 8.6" fill="#e9e9ec" stroke="#141414" stroke-width="1.3" stroke-linejoin="round" /><path d="M0 -11.6L2.8 -8.4L-0.8 3.6L-2.4 -6.6Z" fill="#fff" stroke="#141414" stroke-width="1.2" stroke-linejoin="round" /><path d="M3.4 -6.6L10.4 -4C9 3 6.4 8 2 12L-5 8.4C-0.6 4 2 0 3.4 -6.6Z" fill="url(#gbl)" stroke="#141414" stroke-width="1.4" stroke-linejoin="round" /><path d="M11.6 17.6H17.6V11.6Z" fill="#77787c"/></g>
<g transform="translate(54 503)"><path d="M-4.2 -12.6H0.6V14H-4.2Z" fill="#6a88f2" stroke="#141414" stroke-width="1.3" stroke-linejoin="round" /><circle cx="-11" cy="-5.6" r="2.4" fill="#141414"/><circle cx="6.4" cy="-5.8" r="2.4" fill="#141414"/><path d="M-10.6 -2.6L-4.6 -1.6M-10.6 -2.6L-9.4 4.6H-4.6V9M2 -2.6L8.6 -1.4L11.6 4L9.6 8.6L13.6 13.6M2 -1L6 3.6L1 6" fill="none" stroke="#141414" stroke-width="2.2" stroke-linejoin="round" /><path d="M11.6 17.6H17.6V11.6Z" fill="#77787c"/></g>
<g transform="translate(89 503)"><path d="M-12.4 2L-7.6 -1.4L-5 6.4C0 -2.6 6 -9 12.4 -13.4C6 -6 0 3.6 -3.6 12.4H-7.2Z" fill="#141414" stroke="#141414" stroke-width="0.5" stroke-linejoin="round" /><path d="M11.6 17.6H17.6V11.6Z" fill="#77787c"/></g>
<g transform="translate(124 503)"><path d="M-11.8 -6.4L-3 -10L4.6 -7V3.6L-3.6 7.6L-11.8 3.6Z" fill="#d4d5d8" stroke="#141414" stroke-width="1.4" stroke-linejoin="round" /><path d="M-11.8 -6.4L-3.6 -2.6L4.6 -7M-3.6 -2.6V7.6" fill="none" stroke="#141414" stroke-width="1" stroke-linejoin="round" /><path d="M5.6 -8.6L12.8 5C12.8 9 -0.4 9 -0.4 5Z" fill="url(#gsph2)" stroke="#141414" stroke-width="1.3" stroke-linejoin="round" /><path d="M11.6 17.6H17.6V11.6Z" fill="#77787c"/></g>
<g transform="translate(19 538)"><path d="M-10.6 6L0 -3.4L10.4 5L-1 11.6Z" fill="#f3c64c" stroke="#141414" stroke-width="1.3" stroke-linejoin="round" /><path d="M0 -3.4L-1 11.6L10.4 5Z" fill="#b8912c" stroke="#141414" stroke-width="0.8" stroke-linejoin="round" /><path d="M-4 -9L0.6 -12.8L9 -12.6V-8.4L3 -7.4L-1.6 -6.4Z" fill="#f4f4f4" stroke="#555" stroke-width="0.8" stroke-linejoin="round" /><path d="M-3 -9.2L0 -6.8M-1.4 -10.4L1.8 -7.4M0.2 -11.4L3.4 -8.4" fill="none" stroke="#444" stroke-width="0.9" stroke-linejoin="round" /><rect x="9" y="-13.4" width="3" height="6" fill="#141414"/><path d="M11.6 17.6H17.6V11.6Z" fill="#77787c"/></g>
</svg>
</aside>
<aside id="osnap">
<div class="p" style="left:2px;top:595px;width:146px;height:397px;background:#ebecf0;border-radius:6px 6px 0 0;"></div>
<div class="p" style="left:47px;top:619px;width:101px;height:25px;background:#dbdce0;border-radius:0 0 0 7px;"></div>
<span class="t " style="left:3.00px;top:597.00px;font-size:15px;letter-spacing:-0.544px;color:#6a6e7c;">Osnap</span><div class="p cb" style="left:5px;top:651.1px;width:14px;height:14px;background:#eceef4;border:1px solid #b7bfda;"></div>
<span class="t " style="left:27.50px;top:649.00px;font-size:15px;letter-spacing:-1.450px;color:#6c7182;">End</span><div class="p cb" style="left:5px;top:671.1px;width:14px;height:14px;background:#eceef4;border:1px solid #b7bfda;"></div>
<span class="t " style="left:27.50px;top:669.00px;font-size:15px;letter-spacing:-0.350px;color:#6c7182;">Near</span><div class="p cb" style="left:5px;top:691.1px;width:14px;height:14px;background:#eceef4;border:1px solid #b7bfda;"></div>
<span class="t " style="left:27.50px;top:689.00px;font-size:15px;letter-spacing:-0.425px;color:#6c7182;">Point</span><div class="p cb" style="left:5px;top:711.1px;width:14px;height:14px;background:#eceef4;border:1px solid #b7bfda;"></div>
<span class="t " style="left:27.50px;top:709.00px;font-size:15px;letter-spacing:0.325px;color:#6c7182;">Mid</span><div class="p cb" style="left:5px;top:731.1px;width:14px;height:14px;background:#eceef4;border:1px solid #b7bfda;"></div>
<span class="t " style="left:27.50px;top:729.00px;font-size:15px;letter-spacing:-1.762px;color:#6c7182;">Cen</span><div class="p cb" style="left:5px;top:751.1px;width:14px;height:14px;background:#eceef4;border:1px solid #b7bfda;"></div>
<span class="t " style="left:27.50px;top:749.00px;font-size:15px;letter-spacing:-0.175px;color:#6c7182;">Int</span><div class="p cb" style="left:5px;top:771.1px;width:14px;height:14px;background:#eceef4;border:1px solid #b7bfda;"></div>
<span class="t " style="left:27.50px;top:769.00px;font-size:15px;letter-spacing:-1.183px;color:#6c7182;">Perp</span><div class="p cb" style="left:5px;top:791.1px;width:14px;height:14px;background:#eceef4;border:1px solid #b7bfda;"></div>
<span class="t " style="left:27.50px;top:789.00px;font-size:15px;letter-spacing:-1.375px;color:#6c7182;">Tan</span><div class="p cb" style="left:5px;top:811.1px;width:14px;height:14px;background:#eceef4;border:1px solid #b7bfda;"></div>
<span class="t " style="left:27.50px;top:809.00px;font-size:15px;letter-spacing:-0.625px;color:#6c7182;">Quad</span><div class="p cb" style="left:5px;top:831.1px;width:14px;height:14px;background:#eceef4;border:1px solid #b7bfda;"></div>
<span class="t " style="left:27.50px;top:829.00px;font-size:15px;letter-spacing:-0.175px;color:#6c7182;">Knot</span><div class="p cb" style="left:5px;top:851.1px;width:14px;height:14px;background:#eceef4;border:1px solid #b7bfda;"></div>
<span class="t " style="left:27.50px;top:849.00px;font-size:15px;letter-spacing:-0.425px;color:#6c7182;">Vertex</span><div class="p cb" style="left:5px;top:871.1px;width:14px;height:14px;background:#eceef4;border:1px solid #b7bfda;"></div>
<span class="t " style="left:27.50px;top:869.00px;font-size:15px;letter-spacing:-0.208px;color:#6c7182;">Project</span><div class="p cb" style="left:5px;top:892.1px;width:14px;height:14px;background:#fff;border:1px solid #b7bfda;"></div>
<span class="t " style="left:27.50px;top:889.00px;font-size:15px;letter-spacing:-0.137px;color:#1c2030;">Disable</span></aside>
<main id="viewport">
<div class="p" style="left:152px;top:195px;width:1457px;height:770px;background:#c3c9dc;"></div>
<div class="p" style="left:153px;top:196px;width:1455px;height:768px;background:#9da3aa;overflow:hidden;"><svg style="left:0;top:0" width="1455" height="768" viewBox="153 196 1455 768">
<g id="grid" fill="none" stroke-width="1">
<path stroke="#9399a0" d="M150 203.3L156.6 193M150 218.4L166.2 193M150 233.7L175.8 193M150 265L194.9 193M150 281L204.4 193M150 297.2L214 193M150 313.7L223.5 193M150 347.3L242.7 193M150 364.6L252.2 193M150 382.1L261.8 193M150 399.8L271.3 193M150 965.4L157.7 967M150 436.2L290.5 193M150 938.9L284.4 967M150 454.9L300 193M150 925.8L347.7 967M150 473.8L309.6 193M150 912.8L411.1 967M150 493L319.1 193M150 900L474.4 967M150 532.4L338.3 193M150 874.7L601.1 967M150 552.7L347.8 193M150 862.2L664.5 967M150 573.2L357.4 193M150 849.8L727.8 967M150 594.1L366.9 193M150 837.5L791.2 967M150 637L386.1 193M150 813.3L917.9 967M150 658.9L395.6 193M150 801.4L981.2 967M150 681.3L405.2 193M150 789.5L1044.6 967M150 704.1L414.7 193M150 777.8L1107.9 967M150 750.9L433.9 193M150 754.6L1234.6 967M150 774.9L443.4 193M150 743.2L1297.9 967M150 799.3L453 193M150 731.8L1361.3 967M150 824.3L462.5 193M150 720.6L1424.6 967M150 875.5L481.7 193M150 698.4L1468.4 951.1M150 901.9L491.2 193M150 687.4L1468.5 939.1M150 928.7L500.8 193M150 676.6L1468.6 927.2M150 956.1L510.3 193M150 665.8L1468.7 915.4M171.1 967L529.5 193M150 644.5L1469 892.1M184.2 967L539 193M150 634L1469.1 880.6M197.3 967L548.6 193M150 623.6L1469.2 869.2M210.4 967L558.1 193M150 613.3L1469.3 857.8M236.6 967L577.2 193M150 592.8L1469.5 835.5M249.7 967L586.8 193M150 582.8L1469.6 824.4M262.8 967L596.4 193M150 572.8L1469.7 813.5M275.9 967L605.9 193M150 562.8L1469.8 802.6M302.1 967L625 193M150 543.2L1470 781.1M315.2 967L634.6 193M150 533.5L1470.1 770.5M328.3 967L644.2 193M150 523.9L1470.2 760M341.4 967L653.7 193M150 514.4L1470.3 749.5M367.6 967L672.8 193M150 495.6L1470.5 728.9M380.7 967L682.4 193M150 486.2L1470.6 718.7M393.8 967L692 193M150 477L1470.7 708.6M406.9 967L701.5 193M150 467.8L1470.8 698.5M433.1 967L720.6 193M150 449.7L1471 678.6M446.2 967L730.2 193M150 440.7L1471.1 668.8M459.3 967L739.8 193M150 431.9L1471.2 659.1M472.4 967L749.3 193M150 423L1471.3 649.4M498.6 967L768.4 193M150 405.6L1471.5 630.3M511.7 967L778 193M150 397L1471.6 620.8M524.8 967L787.6 193M150 388.4L1471.7 611.5M537.9 967L797.1 193M150 379.9L1471.8 602.2M564.1 967L816.2 193M150 363.1L1472 583.7M577.2 967L825.8 193M150 354.8L1472.1 574.6M590.3 967L835.3 193M150 346.5L1472.1 565.6M603.5 967L844.9 193M150 338.3L1472.2 556.6M629.7 967L864 193M150 322.1L1472.4 538.9M642.8 967L873.6 193M150 314.1L1472.5 530.1M655.9 967L883.1 193M150 306.2L1472.6 521.4M669 967L892.7 193M150 298.3L1472.7 512.7M695.2 967L911.8 193M150 282.6L1472.8 495.6M708.3 967L921.4 193M150 274.9L1472.9 487.1M721.4 967L930.9 193M150 267.2L1473 478.7M734.5 967L940.5 193M150 259.6L1473.1 470.3M760.7 967L959.6 193M150 244.5L1473.2 453.8M773.8 967L969.2 193M150 237.1L1473.3 445.6M786.9 967L978.7 193M150 229.7L1473.4 437.5M800 967L988.3 193M150 222.3L1473.5 429.4M826.2 967L1007.4 193M150 207.7L1473.6 413.5M839.3 967L1017 193M150 200.5L1473.7 405.6M852.4 967L1026.5 193M150 193.4L1473.8 397.7M865.5 967L1036.1 193M193.8 193L1473.9 389.9M891.7 967L1055.2 193M286.2 193L1474 374.5M904.8 967L1064.8 193M332.4 193L1474.1 366.9M917.9 967L1074.3 193M378.6 193L1474.2 359.3M931 967L1083.9 193M424.8 193L1474.2 351.7M957.2 967L1103 193M517.3 193L1474.4 336.8M970.3 967L1112.6 193M563.5 193L1474.5 329.4M983.4 967L1122.1 193M609.7 193L1474.5 322.1M996.5 967L1131.7 193M655.9 193L1474.6 314.8M1022.7 967L1150.8 193M748.3 193L1474.7 300.4M1035.8 967L1160.4 193M794.5 193L1474.8 293.2M1048.9 967L1169.9 193M840.7 193L1474.9 286.1M1062 967L1179.5 193M886.9 193L1474.9 279.1M1088.3 967L1198.6 193M979.4 193L1475.1 265.1M1101.4 967L1208.1 193M1025.6 193L1475.2 258.2M1114.5 967L1217.7 193M1071.8 193L1475.2 251.3M1127.6 967L1227.3 193M1118 193L1475.3 244.5M1153.8 967L1246.4 193M1210.4 193L1475.4 230.9M1166.9 967L1255.9 193M1256.6 193L1475.5 224.2M1180 967L1265.5 193M1302.8 193L1475.5 217.6M1193.1 967L1275.1 193M1349 193L1475.6 210.9M1219.3 967L1294.2 193M1441.4 193L1475.7 197.8M1232.4 967L1303.7 193M1245.5 967L1313.3 193M1258.6 967L1322.8 193M1284.8 967L1342 193M1297.9 967L1351.5 193M1311 967L1361.1 193M1324.1 967L1370.6 193M1350.3 967L1389.8 193M1363.4 967L1399.3 193M1376.5 967L1408.9 193M1389.6 967L1418.4 193M1415.8 967L1437.6 193M1428.9 967L1447.1 193M1442 967L1456.7 193M1455.1 967L1466.2 193"/>
<path stroke="#81868c" d="M150 249.2L185.3 193M150 330.4L233.1 193M150 417.9L280.9 193M150 952.1L221 967M150 512.6L328.7 193M150 887.3L537.8 967M150 615.3L376.5 193M150 825.4L854.5 967M150 727.3L424.3 193M150 766.1L1171.2 967M150 849.6L472.1 193M150 709.4L1468.3 963.2M157.9 967L519.9 193M150 655.1L1468.8 903.7M223.5 967L567.7 193M150 603L1469.4 846.6M289 967L615.5 193M150 553L1469.9 791.8M354.5 967L663.3 193M150 504.9L1470.4 739.2M420 967L711.1 193M150 458.7L1470.9 688.5M485.5 967L758.9 193M150 414.3L1471.4 639.8M551 967L806.7 193M150 371.5L1471.9 592.9M616.6 967L854.5 193M150 330.2L1472.3 547.7M682.1 967L902.3 193M150 290.4L1472.7 504.1M747.6 967L950.1 193M150 252.1L1473.2 462M813.1 967L997.8 193M150 215L1473.6 421.4M878.6 967L1045.6 193M240 193L1473.9 382.2M944.1 967L1093.4 193M471.1 193L1474.3 344.3M1009.6 967L1141.2 193M702.1 193L1474.7 307.6M1075.1 967L1189 193M933.1 193L1475 272.1M1140.7 967L1236.8 193M1164.2 193L1475.4 237.7M1206.2 967L1284.6 193M1395.2 193L1475.7 204.4M1271.7 967L1332.4 193M1337.2 967L1380.2 193M1402.7 967L1428 193M1468.2 967L1475.8 193"/>
<path stroke="#a14949" stroke-width="1.9" d="M716.4 466.3L1471.9 592.9"/>
<path stroke="#449644" stroke-width="2" d="M716.4 466.3L806.7 193"/>
</g>
<defs>
<linearGradient id="gs1" x1="0" x2="1" y1="0" y2="0"><stop offset="0" stop-color="#2f9a17"/><stop offset=".12" stop-color="#217c0c"/><stop offset=".5" stop-color="#1f830a"/><stop offset=".72" stop-color="#2aa814"/><stop offset=".93" stop-color="#3fb52a"/><stop offset=".975" stop-color="#63c455"/><stop offset="1" stop-color="#35a81f"/></linearGradient>
<linearGradient id="gs2" x1="0" x2="1" y1="0" y2="0"><stop offset="0" stop-color="#2b9414"/><stop offset=".35" stop-color="#1d7409"/><stop offset="1" stop-color="#1c7808"/></linearGradient>
<linearGradient id="gs3" x1="0" x2="1" y1="0" y2="0"><stop offset="0" stop-color="#229c0b"/><stop offset=".6" stop-color="#2aa812"/><stop offset=".93" stop-color="#3cb426"/><stop offset="1" stop-color="#4fbd3c"/></linearGradient>
<linearGradient id="gt1" x1="0" x2="1" y1="0" y2=".3"><stop offset="0" stop-color="#4bff2c"/><stop offset="1" stop-color="#3cf51e"/></linearGradient>
</defs>
<g id="wires" fill="none" stroke="#2cff05" stroke-width="1.4" stroke-linecap="round">
<ellipse cx="850" cy="298.2" rx="71" ry="54.5" transform="rotate(-1 850 298.2)" />
<ellipse cx="1008" cy="343.5" rx="57.5" ry="44" transform="rotate(1 1008 343.5)" />
<ellipse cx="919" cy="375.5" rx="76.5" ry="59" />
<ellipse cx="927" cy="371" rx="60" ry="44.6" />
<ellipse cx="838.5" cy="403" rx="78" ry="60" />
<path d="M700 404.5L979.5 365.4M797 373.3L1057.5 337.6M936.3 308.8L791 524.2M1013 283.3L877.5 492.5M879.5 283.5L877.5 492.5M796 320L791 524.2M897 365L912 381"/>
</g>
<g id="elev" fill="none" stroke="#2cff05" stroke-width="1.5">
<path d="M955.5 196L1089.9 215.7M973.8 198.7L975 194M985.7 200.4L987 194M988.5 200.8L990 194M998.4 202.3L1000 194M1004.7 203.2L1006.3 194M1009 203.8L1010.5 194M1033.6 207.3L1035.7 194M1181.6 194L1176.5 228.3L1477 271.9M1260.5 240.4L1265.5 194M1273.4 242.2L1278.9 194M1277.4 242.8L1281.7 194M1290.4 244.6L1295.4 194M1297.6 245.7L1301.9 194M1305.4 246.8L1309.5 194M1311.4 247.7L1315.6 194M1318.6 248.7L1322.9 194M1321 249L1324.5 194M1325.1 249.6L1328.5 194M1328.3 250L1332.2 194M1337.2 251.3L1341.1 194M1398.6 260L1402 194M1401.8 260.5L1404.3 194"/>
</g>
<g id="draw2d" fill="none" stroke="#2cff05" stroke-width="1.5" stroke-linejoin="round">
<path d="M1245 363L1237.7 362.2L1230.3 361.1L1223.1 359.7L1216.2 358.1L1209.4 356.3L1203 354.2L1197 351.9L1191.5 349.5L1186.4 346.8L1181.9 344.1L1178 341.2L1174.7 338.3L1172.1 335.3L1170.1 332.3L1168.9 329.3L1168.3 326.3L1168.5 323.4L1169.4 320.6L1171 317.9L1173.3 315.3L1176.3 312.9L1179.9 310.7L1184.1 308.7L1188.9 306.9L1194.2 305.4L1199.9 304.1L1206.1 303.1L1212.7 302.4L1219.6 301.9L1226.7 301.8L1233.9 301.9L1241.3 302.4L1248.7 303.1L1256 304.1L1263.3 305.4L1270.3 306.9L1277.1 308.7L1283.7 310.7L1289.8 312.9L1295.5 315.3L1300.7 317.9L1305.4 320.6L1309.5 323.4L1313.1 326.3L1315.9 329.3L1318.1 332.3L1319.6 335.3L1320.4 338.3L1320.4 341.2L1319.8 344.1L1318.4 346.8L1316.4 349.4L1313.6 351.9L1310.2 354.2L1306.2 356.2L1301.6 358.1L1296.5 359.7L1290.8 361.1L1284.8 362.2L1278.3 363"/>
<ellipse cx="1246.3" cy="421.6" rx="73.5" ry="33.6" transform="rotate(7.3 1246.3 421.6)" />
<ellipse cx="1321" cy="480" rx="80" ry="40.5" transform="rotate(6 1321 480)" />
<ellipse cx="1411" cy="467" rx="58" ry="29" transform="rotate(8 1411 467)" />
<path d="M1168.3 327L1173.3 414M1320.5 341L1319.2 460L1318.3 520.1M1245.2 363C1246.5 362.1 1249.9 359.2 1253 357.5C1256.1 355.8 1259.8 353.8 1264 352.6C1268.2 351.4 1275.8 350.8 1278.2 350.4M1278.2 350.4L1278.5 560.3L1410.5 428M1245.2 363L1247.5 456M1278.4 372.5L1239.6 372L1242.3 472M1239.7 377C1240.2 378.5 1241.3 383.1 1243 386C1244.7 388.9 1247.3 391.9 1250 394.5C1252.7 397.1 1255.9 399.7 1258.9 401.7C1261.9 403.7 1264.9 405 1268 406.5C1271.1 408 1276.1 409.9 1277.7 410.6M1180.1 464.6L1460.1 468.2M1354.7 373.4L1357.6 374.3L1374.8 374.3L1381.6 368.5L1358.1 358.2M1358.1 358.2C1357.5 358.8 1355.4 360.4 1354.6 362C1353.8 363.6 1353.2 365.6 1353.2 367.5C1353.2 369.4 1354.5 372.4 1354.7 373.4M1358.1 358.2L1357.6 374.3M1353 368L1352.9 466M1356 373.5L1355.5 467M1357.6 374.3L1357.8 466M1374.5 374.3L1372.4 466M1381.5 368.5L1380.3 460M1365 382.7L1363.5 476M1404.2 399.4L1402.3 492.5M1319.8 420L1365 382.7M1365 382.7C1366.2 383.5 1369.2 385.9 1372 387.5C1374.8 389.1 1378.3 390.6 1381.6 392C1384.9 393.4 1388.2 394.8 1392 396C1395.8 397.2 1402.2 398.8 1404.2 399.4M1319.8 420C1323.2 420.3 1333.5 421.8 1340 422C1346.5 422.2 1353.2 422.2 1359 421.5C1364.8 420.8 1370.1 419.4 1375 418C1379.9 416.6 1384.7 414.9 1388.5 413.1C1392.3 411.3 1395.4 409.3 1398 407C1400.6 404.7 1403.2 400.7 1404.2 399.4"/>
</g>
<g id="solids" stroke-linejoin="round">
<path d="M841.4 300L841.2 319.4L841.2 323.1L840.9 326.8L840.2 330.5L839.3 334.2L838 337.8L836.4 341.3L834.5 344.8L832.4 348.1L829.9 351.4L827.2 354.5L824.2 357.5L821 360.4L817.5 363.1L813.8 365.6L809.9 367.9L805.9 370L801.6 372L797.2 373.7L792.7 375.2L788 376.5L783.3 377.5L778.5 378.3L773.6 378.9L768.7 379.2L763.8 379.3L758.9 379.2L754.1 378.8L749.2 378.2L744.5 377.3L739.9 376.2L735.3 374.9L730.9 373.3L726.7 371.5L722.6 369.6L718.7 367.4L715 365L711.5 362.4L708.3 359.7L705.3 356.8L702.6 353.8L700.1 350.6L698 347.4L696.1 344L694.5 340.5L693.2 336.9L692.3 333.3L691.6 329.7L691.3 326L691.2 306L690.2 306.8L691.2 310L692.5 313.1L694.1 316.2L695.8 319.1L697.8 322L700.1 324.9L702.5 327.5L705.2 330.1L708 332.6L711.1 334.9L714.3 337.1L717.7 339.2L721.3 341L725 342.8L728.8 344.3L732.8 345.7L736.9 346.9L741 348L745.3 348.8L749.6 349.5L754 350L758.4 350.2L762.8 350.3L767.2 350.2L771.6 350L776 349.5L780.4 348.8L784.7 348L788.9 346.9L793.1 345.7L797.2 344.3L801.1 342.7L805 341L808.6 339.1L812.2 337.1L815.6 334.9L818.8 332.5L821.8 330.1L824.7 327.5L827.3 324.8L829.7 322L831.9 319.1L833.9 316.1L835.6 313L837.1 309.9L838.4 306.7L839.4 303.5L840.1 300.2Z" fill="url(#gs1)" stroke="#2cff05" stroke-width="1.6"/>
<path d="M840.9 290.4L840.8 295.3L840.1 300.2L838.9 305.1L837.1 309.9L834.8 314.6L831.9 319.1L828.5 323.4L824.7 327.5L820.3 331.3L815.6 334.9L810.4 338.1L805 341L799.2 343.5L793.1 345.7L786.8 347.5L780.4 348.8L773.8 349.7L767.2 350.2L760.6 350.3L754 350L747.4 349.2L741 348L734.8 346.4L728.8 344.3L723.1 341.9L717.7 339.2L712.7 336L708 332.6L703.8 328.9L700.1 324.9L696.8 320.6L694.1 316.2L691.9 311.5L690.2 306.8L689.1 301.9L688.6 297L688.7 292.1L689.4 287.2L690.6 282.3L692.4 277.5L694.7 272.8L697.6 268.3L701 264L704.8 259.9L709.2 256.1L713.9 252.5L719.1 249.3L724.5 246.4L730.3 243.9L736.4 241.7L742.7 239.9L749.1 238.6L755.7 237.7L762.3 237.2L768.9 237.1L775.5 237.4L782.1 238.2L788.5 239.4L794.7 241L800.7 243.1L806.4 245.5L811.8 248.2L816.8 251.4L821.5 254.8L825.7 258.5L829.4 262.5L832.7 266.8L835.4 271.2L837.6 275.9L839.3 280.6L840.4 285.5L840.9 290.4Z" fill="url(#gt1)" stroke="#2cff05" stroke-width="2.6"/>
<path d="M765 351.2C766 349.8 768.7 345.7 771 343C773.3 340.3 776.3 337.4 779 335C781.7 332.6 784.3 330.4 787 328.5C789.7 326.6 793.8 324.2 795.2 323.3L796 353L783.3 359.5L766 361.7Z" fill="#2fa815" stroke="#2cff05" stroke-width="2"/>
<path d="M795.6 323L796.6 375" stroke="#2cff05" stroke-width="3" fill="none"/>
<path d="M872 349L889 347L889.5 372L872.5 372Z" fill="#22a00b" stroke="#2cff05" stroke-width="1.5"/>
<path d="M890 347L898.4 335L898.6 362L891 373Z" fill="#3cae25" stroke="#2cff05" stroke-width="1.5"/>
<path d="M877.2 319.7C876.4 320.7 873.7 323.3 872.5 325.5C871.3 327.7 870.4 330.4 870 333C869.6 335.6 870 338.4 870.3 341C870.6 343.6 871.5 347.1 871.8 348.3L889 346L898.3 334.3Z" fill="#36e916" stroke="#2cff05" stroke-width="2.4"/>
<path d="M758 380C758.5 382.6 759.3 391 760.7 395.3C762.1 399.6 763.7 402.4 766.6 405.9C769.5 409.4 774.2 413.3 778.3 416.5C782.4 419.7 789.1 423.8 791.3 425.3L793.3 426L793 452.5C790.8 451 783.3 447.1 779.5 443.6C775.7 440.2 772.8 435.9 770 431.8C767.2 427.7 764.7 423.6 763 418.9C761.3 414.2 760.8 408.4 760 403.6C759.2 398.8 758.5 392.3 758.2 390Z" fill="url(#gs2)" stroke="#2cff05" stroke-width="1.6"/>
<path d="M756.3 364.6C759.9 364 771.7 362 778 361C784.3 360 791.6 359.2 794.3 358.8L793.2 425.5L791.3 425.3C789.1 423.8 782.4 419.7 778.3 416.5C774.2 413.3 769.5 409.4 766.6 405.9C763.7 402.4 762.1 399.6 760.7 395.3C759.3 391 758.7 385.1 758 380C757.3 374.9 756.6 367.2 756.3 364.6Z" fill="#40f620" stroke="#2cff05" stroke-width="2.4"/>
<path d="M795.3 358L793.3 453" stroke="#2cff05" stroke-width="2.2" fill="none"/>
<path d="M794.6 385L793.4 426L793.2 400Z" fill="#176a06"/>
<path d="M830.3 433.4C833 433.2 840.6 432.9 846.8 432C853 431.1 860.5 430.2 867.4 427.9C874.3 425.6 882 422 888 418.3C894 414.6 899 410.2 903.1 405.9C907.2 401.5 910.7 396 912.7 392.2C914.8 388.4 915 384.8 915.4 383.3L915 400L914.3 413C913.3 415.5 911.9 422.9 908.6 427.9C905.4 432.9 900.5 438.4 894.8 443C889.1 447.6 881.1 452.4 874.2 455.4C867.3 458.4 860.6 459.7 853.6 460.9C846.6 462.1 835.6 462.1 832 462.4Z" fill="url(#gs3)" stroke="#2cff05" stroke-width="1.8"/>
<path d="M879 362C880.5 363.2 884.2 367 888 369.5C891.8 372 897.1 374.8 901.7 377.1C906.3 379.4 913.1 382.3 915.4 383.3L915.4 383.3C915 384.8 914.8 388.4 912.7 392.2C910.7 396 907.2 401.5 903.1 405.9C899 410.2 894 414.6 888 418.3C882 422 874.3 425.6 867.4 427.9C860.5 430.2 853 431.1 846.8 432C840.6 432.9 833 433.2 830.3 433.4Z" fill="#33e913" stroke="#2cff05" stroke-width="2.6"/>
</g>
<g id="gumball" fill="none" stroke-linecap="butt">
<path d="M918.7 475.9L942.7 480.1M916.3 485.5L940.7 489.6M914 495L938.7 499" stroke="#f0352b" stroke-width="1.1"/>
<path d="M918.7 475.9L914 495M930.7 478L926.3 497M942.7 480.1L938.7 499" stroke="#2cff05" stroke-width="1.1"/>
<path d="M829.2 494.2L895 504.7L881.7 559.7L814.2 548.3Z" stroke="#fff000" stroke-width="1.3"/>
<path d="M691 499L855.5 526.5M952 542.5L1023 555.5" stroke="#fff000" stroke-width="1.6"/>
<path d="M697 500L855.5 526.5" stroke="#ff1e1e" stroke-width="1.8" stroke-dasharray="3.2 3.2"/>
<path d="M696.7 504.2L700.8 509.4L706.7 501.9" stroke="#fff000" stroke-width="1.1"/>
<path d="M1006.8 553.1L1013.8 562.5L1022 556.5" stroke="#fff000" stroke-width="1.1"/>
<circle cx="1023.2" cy="555.6" r="2.6" fill="#f4ffe0" stroke="#2cff05" stroke-width="1.4"/>
<path d="M758 510.8C757.4 513.5 754.2 520.5 754.2 526.7C754.2 533 755.1 540 758.3 548.3C761.5 556.6 766.9 568.6 773.3 576.7C779.7 584.8 788.9 591.9 796.7 596.7C804.5 601.6 814 603.7 820 605.8C826 607.9 830.4 608.6 832.5 609.2" stroke="#1d24ff" stroke-width="2.4"/>
<path d="M758 510.8C758.8 513 760.5 519.1 763 524C765.5 528.9 767.7 534 773.3 540C778.9 546 788.4 554.6 796.7 560C805 565.4 813.4 569 823.3 572.5C833.1 576 850.4 579.4 855.8 580.8" stroke="#21ff21" stroke-width="2.4"/>
<path d="M855.8 581.5C855.4 583.5 854.5 588.8 853.3 593.3C852 597.8 850.1 603.8 848.3 608.3C846.5 612.8 844.3 617.2 842.5 620C840.7 622.8 838.9 625 837.5 625C836.1 625 835 622.5 834.2 620C833.4 617.5 832.8 611.7 832.5 610" stroke="#ff1e1e" stroke-width="2.2"/>
<path d="M851 531L817 565.5" stroke="#fff" stroke-width="1.4" stroke-dasharray="3.5 3.5"/>
<circle cx="811.3" cy="571.3" r="6.2" stroke="#fff" stroke-width="1.2"/>
<rect x="842.6" y="549" width="11" height="10.6" rx="1.5" stroke="#21ff21" stroke-width="2"/>
<path d="M853 532L848.5 550" stroke="#21ff21" stroke-width="1.5" stroke-dasharray="1.5 4"/>
<path d="M866.7 528.3L930 539" stroke="#ff1e1e" stroke-width="2.6"/>
<path d="M952.1 542.6L929.3 533L928.6 544.3Z" fill="#ff1e1e"/>
<path d="M856.7 519L871 466" stroke="#21ff21" stroke-width="2.6"/>
<path d="M875.5 449.5L865.5 465.4L876.1 467.7Z" fill="#21ff21"/>
<path d="M855 519L853.9 481" stroke="#1d24ff" stroke-width="2.6"/>
<path d="M853.6 467L847.6 481.5L860.3 481.3Z" fill="#1d24ff"/>
<rect x="850.2" y="526.4" width="10" height="10" rx="2" stroke="#1d24ff" stroke-width="2"/>
<circle cx="855.5" cy="526.7" r="3" fill="#fff" stroke="#111" stroke-width="1.2"/>
<rect x="686.6" y="494.2" width="9.4" height="9.4" rx="1.8" stroke="#ff1e1e" stroke-width="2"/>
<circle cx="691.2" cy="499" r="2.4" fill="#f2ffe6" stroke="#2cff05" stroke-width="1.3"/>
</g>
<g id="axisicon" stroke="#5c5d60" stroke-width="1.2" fill="none"><path d="M197.6 899L197.2 919.9L232.4 925.9M197.2 919.9L207.2 892"/></g>
<g fill="#5c5d60" font-size="15px"><text x="236.4" y="927">x</text><text x="207.8" y="888.4">y</text><text x="200" y="900.6">z</text></g>
</svg>
</div>
<div class="p" style="left:153px;top:196px;width:114px;height:23px;background:#67a5fd;"></div>
<span class="t " style="left:163.50px;top:197.00px;font-size:15px;letter-spacing:-0.472px;color:#23262e;font-weight:700;">Perspective</span></main>
<footer>
<div class="p" style="left:148px;top:964px;width:1460px;height:28px;background:#dbdce0;"></div>
<div class="p" style="left:151.5px;top:964px;width:100px;height:28px;background:#ebecf0;border-radius:0 0 6px 6px;border:1px solid #cdd2e6;border-top:none;box-sizing:border-box;"></div>
<span class="t " style="left:166.00px;top:969.00px;font-size:15px;letter-spacing:-0.388px;color:#1c1c20;">Perspective</span><span class="t " style="left:262.00px;top:969.00px;font-size:15px;letter-spacing:0.675px;color:#686c7a;">Top</span><span class="t " style="left:310.00px;top:969.00px;font-size:15px;letter-spacing:-0.006px;color:#686c7a;">Front</span><span class="t " style="left:365.00px;top:969.00px;font-size:15px;letter-spacing:0.244px;color:#686c7a;">Right</span><div class="p" style="left:0px;top:992px;width:1919px;height:27px;background:#ebecf0;"></div>
<div class="p" style="left:0px;top:1018px;width:1919px;height:1px;background:#cfd0d4;"></div>
<div class="p" style="left:1094px;top:993px;width:98.5px;height:24px;background:#d1d9ef;border-radius:4px;"></div>
<div class="p" style="left:1196px;top:993px;width:141px;height:24px;background:#d1d9ef;border-radius:4px;"></div>
<div class="p" style="left:1655.5px;top:993px;width:55px;height:24px;background:#d1d9ef;border-radius:4px;"></div>
<span class="t " style="left:52.50px;top:996.00px;font-size:15px;letter-spacing:-0.840px;color:#50535e;">CPlane</span><span class="t " style="left:147.50px;top:996.00px;font-size:15px;letter-spacing:-0.504px;color:#50535e;">x 16.347</span><span class="t " style="left:255.00px;top:996.00px;font-size:15px;letter-spacing:-0.318px;color:#50535e;">y -0.861</span><span class="t " style="left:378.00px;top:996.00px;font-size:15px;letter-spacing:-0.512px;color:#50535e;">z 0</span><span class="t " style="left:466.50px;top:996.00px;font-size:15px;letter-spacing:0.130px;color:#50535e;">Millimeters</span><span class="t " style="left:598.50px;top:996.00px;font-size:15px;letter-spacing:-0.008px;color:#50535e;">Default</span><span class="t " style="left:818.00px;top:996.00px;font-size:15px;letter-spacing:-0.322px;color:#50535e;">Grid Snap</span><span class="t " style="left:908.00px;top:996.00px;font-size:15px;letter-spacing:0.375px;color:#50535e;">Ortho</span><span class="t " style="left:972.00px;top:996.00px;font-size:15px;letter-spacing:-0.470px;color:#50535e;">Planar</span><span class="t " style="left:1038.00px;top:996.00px;font-size:15px;letter-spacing:-0.544px;color:#50535e;">Osnap</span><span class="t " style="left:1104.00px;top:996.00px;font-size:15px;letter-spacing:-0.306px;color:#1c1c20;font-weight:700;">SmartTrack</span><span class="t " style="left:1206.00px;top:996.00px;font-size:15px;letter-spacing:-0.202px;color:#1c1c20;font-weight:700;">Gumball (CPlane)</span><span class="t " style="left:1373.00px;top:996.00px;font-size:15px;letter-spacing:-0.197px;color:#50535e;">Auto CPlane (Object)</span><span class="t " style="left:1542.00px;top:996.00px;font-size:15px;letter-spacing:-0.171px;color:#50535e;">Record History</span><span class="t " style="left:1665.50px;top:996.00px;font-size:15px;letter-spacing:-0.235px;color:#1c1c20;font-weight:700;">Filter</span><span class="t " style="left:1727.50px;top:996.00px;font-size:15px;letter-spacing:-0.144px;color:#50535e;">Available physical</span><div class="p" style="left:570px;top:995px;width:18px;height:18px;background:#2dfc0b;border:1.5px solid #1a1a1a;"></div>
</footer>
<aside id="layers">
<div class="p" style="left:1612px;top:194px;width:1306px;height:70px;background:#ebecf0;width:306px;border-radius:6px 6px 0 0;"></div>
<div class="p" style="left:1612px;top:264px;width:281px;height:728px;background:#ebecf0;"></div>
<div class="p" style="left:1893px;top:264px;width:26px;height:728px;background:#dbdce0;border-radius:7px 0 0 0;"></div>
<span class="t " style="left:1613.50px;top:196.00px;font-size:15px;letter-spacing:-0.900px;color:#6a6e7c;">Layers</span><div class="p" style="left:1612px;top:217px;width:282px;height:1px;background:#e2e3e8;"></div>
<div class="p" style="left:1613px;top:288px;width:273px;height:25px;background:#fff;border:1px solid #b9c3e0;border-radius:13px;"></div>
<span class="t " style="left:1635.00px;top:292.00px;font-size:15px;letter-spacing:-0.810px;color:#6d7180;">Search</span><div class="p" style="left:1612px;top:323px;width:276px;height:669px;background:#fff;"></div>
<span class="t " style="left:1618.00px;top:327.00px;font-size:15px;letter-spacing:-0.625px;color:#1c1c20;">Layer</span><span class="t " style="left:1818.00px;top:327.00px;font-size:15px;letter-spacing:0.096px;color:#1c1c20;">Material</span><div class="p" style="left:1711px;top:323px;width:1px;height:28px;background:#dcdfe8;"></div>
<div class="p" style="left:1736px;top:323px;width:1px;height:28px;background:#dcdfe8;"></div>
<div class="p" style="left:1761px;top:323px;width:1px;height:28px;background:#dcdfe8;"></div>
<div class="p" style="left:1786px;top:323px;width:1px;height:28px;background:#dcdfe8;"></div>
<div class="p" style="left:1811px;top:323px;width:1px;height:28px;background:#dcdfe8;"></div>
<div class="p" style="left:1612px;top:350px;width:276px;height:1px;background:#d5d9e6;"></div>
<div class="p" style="left:1612px;top:495px;width:276px;height:22px;background:#6fb9ff;"></div>
<div class="p" style="left:1613px;top:496.5px;width:98px;height:18.5px;background:transparent;border:1px solid rgba(255,255,255,.28);"></div>
<div class="p" style="left:1713.5px;top:496.5px;width:22px;height:18.5px;background:transparent;border:1px solid rgba(255,255,255,.28);"></div>
<div class="p" style="left:1738.5px;top:496.5px;width:22px;height:18.5px;background:transparent;border:1px solid rgba(255,255,255,.28);"></div>
<div class="p" style="left:1763.5px;top:496.5px;width:22px;height:18.5px;background:transparent;border:1px solid rgba(255,255,255,.28);"></div>
<div class="p" style="left:1788.5px;top:496.5px;width:22px;height:18.5px;background:transparent;border:1px solid rgba(255,255,255,.28);"></div>
<div class="p" style="left:1813.5px;top:496.5px;width:74px;height:18.5px;background:transparent;border:1px solid rgba(255,255,255,.28);"></div>
<span class="t " style="left:1633.50px;top:354.00px;font-size:15px;letter-spacing:0.108px;color:#1c1c20;font-weight:700;">Default</span><div class="p" style="left:1612px;top:375px;width:276px;height:0px;background:transparent;border-top:1px dotted #c3c8da;"></div>
<span class="t " style="left:1633.50px;top:378.00px;font-size:15px;letter-spacing:-0.835px;color:#1c1c20;">Linhas</span><div class="p" style="left:1612px;top:399px;width:276px;height:0px;background:transparent;border-top:1px dotted #c3c8da;"></div>
<span class="t " style="left:1633.50px;top:402.00px;font-size:15px;letter-spacing:-0.475px;color:#1c1c20;">Make2D</span><div class="p" style="left:1612px;top:423px;width:276px;height:0px;background:transparent;border-top:1px dotted #c3c8da;"></div>
<span class="t " style="left:1653.00px;top:425.00px;font-size:15px;letter-spacing:-0.075px;color:#1c1c20;">Visible</span><div class="p" style="left:1612px;top:446px;width:276px;height:0px;background:transparent;border-top:1px dotted #c3c8da;"></div>
<span class="t " style="left:1673.50px;top:449.00px;font-size:15px;letter-spacing:-1.137px;color:#1c1c20;">Curve</span><div class="p" style="left:1612px;top:470px;width:276px;height:0px;background:transparent;border-top:1px dotted #c3c8da;"></div>
<span class="t " style="left:1653.50px;top:473.00px;font-size:15px;letter-spacing:-0.010px;color:#1c1c20;">Hidden</span><div class="p" style="left:1612px;top:494px;width:276px;height:0px;background:transparent;border-top:1px dotted #c3c8da;"></div>
<span class="t " style="left:1673.50px;top:497.00px;font-size:15px;letter-spacing:-1.137px;color:#1c1c20;">Curve</span><div class="p" style="left:1612px;top:518px;width:276px;height:0px;background:transparent;border-top:1px dotted #c3c8da;"></div>
<div class="p" style="left:1621px;top:977.5px;width:99px;height:9.5px;background:#c2c2c2;border-radius:5px;"></div>
</aside>
<svg style="left:0;top:0;pointer-events:none" width="1919" height="1019" viewBox="0 0 1919 1019"><defs><radialGradient id="gyb" cx=".4" cy=".3" r=".8"><stop offset="0" stop-color="#fff27a"/><stop offset=".6" stop-color="#ffd800"/><stop offset="1" stop-color="#e0a800"/></radialGradient><linearGradient id="gyl" x1="0" y1="0" x2="1" y2="1"><stop offset="0" stop-color="#fff6a0"/><stop offset="1" stop-color="#e8c21a"/></linearGradient><radialGradient id="ghelp2" cx=".4" cy=".25" r=".85"><stop offset="0" stop-color="#6d86f2"/><stop offset=".55" stop-color="#2a44cc"/><stop offset="1" stop-color="#1a2aa0"/></radialGradient><linearGradient id="gred" x1="0" y1="0" x2="1" y2="0"><stop offset="0" stop-color="#7a1400"/><stop offset="1" stop-color="#e0421a"/></linearGradient><linearGradient id="gfun" x1="0" y1="0" x2="1" y2="0"><stop offset="0" stop-color="#2a4ad0"/><stop offset=".5" stop-color="#86a2ff"/><stop offset="1" stop-color="#1a36b0"/></linearGradient><linearGradient id="gmon" x1="0" y1="0" x2="0" y2="1"><stop offset="0" stop-color="#f4f4f4"/><stop offset="1" stop-color="#9a9c9f"/></linearGradient></defs><g id="appicon"><rect x="2" y="4" width="20" height="20" fill="#050505"/><path d="M2.2 4.2H8L11.5 10L12.6 16L16 18.8L21.8 15L17.5 21.6L13.5 23.4L9 21.6L2.2 17.8Z" fill="#f4f4f4"/><path d="M6.2 5C6 8.5 5 10.5 3.4 11.8" fill="none" stroke="#3a3a3a" stroke-width="1.5"/><path d="M6.6 14.4L11 18.6" stroke="#4a4a4a" stroke-width="1.6"/><path d="M17.2 13.2L20.8 15.4L18 17.2Z" fill="#050505"/><text x="16.6" y="13.6" font-size="9.5px" fill="#9a9a9a" font-family="Liberation Sans,sans-serif">8</text></g>
<g id="winctl" stroke="#7d7d80" stroke-width="1" fill="none"><path d="M1765.5 13.5H1777.5"/><rect x="1823.5" y="11.5" width="8" height="8" rx="1.5"/><path d="M1826 11.5V10.5Q1826 9.5 1827.5 9.5H1832.5Q1834 9.5 1834 11V16Q1834 17.5 1832.5 17.5H1831.8"/><path d="M1882.5 8.5L1893.5 19.5M1893.5 8.5L1882.5 19.5" stroke-width="1.1"/></g>
<g id="grips" fill="none" stroke="#c2c4cb" stroke-width="1"><circle cx="7.6" cy="77" r="1.3"/><circle cx="7.6" cy="84.5" r="1.3"/><circle cx="7.6" cy="92" r="1.3"/><circle cx="7.6" cy="99.5" r="1.3"/><circle cx="7.6" cy="146.8" r="1.3"/><circle cx="7.6" cy="154.2" r="1.3"/><circle cx="7.6" cy="161.7" r="1.3"/><circle cx="7.6" cy="169.3" r="1.3"/><circle cx="63.8" cy="199.6" r="1.3"/><circle cx="71.4" cy="199.6" r="1.3"/><circle cx="78.9" cy="199.6" r="1.3"/><circle cx="86.5" cy="199.6" r="1.3"/></g>
<path d="M13.5 127V190" stroke="#dfe0e5" stroke-width="1"/><g id="cmdscroll"><rect x="1897" y="54" width="20" height="44" fill="#f0f0f0"/><rect x="1898.5" y="100.5" width="17" height="9.5" fill="#fff" stroke="#c9cace" stroke-width="1"/><rect x="1898.5" y="111.5" width="17" height="9.5" fill="#fff" stroke="#c9cace" stroke-width="1"/><path d="M1903.6 107L1906.6 103L1909.6 107ZM1903.6 114.4L1906.6 118.4L1909.6 114.4Z" fill="#111"/></g>
<g transform="translate(1905 137.5)"><path d="M4.4 -1.2L7.1 -1.1L7.1 1.1L4.4 1.2L4.0 2.3L5.8 4.2L4.2 5.8L2.3 4.0L1.2 4.4L1.1 7.1L-1.1 7.1L-1.2 4.4L-2.3 4.0L-4.2 5.8L-5.8 4.2L-4.0 2.3L-4.4 1.2L-7.1 1.1L-7.1 -1.1L-4.4 -1.2L-4.0 -2.3L-5.8 -4.2L-4.2 -5.8L-2.3 -4.0L-1.2 -4.4L-1.1 -7.1L1.1 -7.1L1.2 -4.4L2.3 -4.0L4.2 -5.8L5.8 -4.2L4.0 -2.3ZM2.6 0A2.6 2.6 0 1 0 -2.6 0A2.6 2.6 0 1 0 2.6 0Z" fill="#c4c5c9" fill-rule="evenodd"/></g>
<g transform="translate(1905 206)"><path d="M4.4 -1.2L7.1 -1.1L7.1 1.1L4.4 1.2L4.0 2.3L5.8 4.2L4.2 5.8L2.3 4.0L1.2 4.4L1.1 7.1L-1.1 7.1L-1.2 4.4L-2.3 4.0L-4.2 5.8L-5.8 4.2L-4.0 2.3L-4.4 1.2L-7.1 1.1L-7.1 -1.1L-4.4 -1.2L-4.0 -2.3L-5.8 -4.2L-4.2 -5.8L-2.3 -4.0L-1.2 -4.4L-1.1 -7.1L1.1 -7.1L1.2 -4.4L2.3 -4.0L4.2 -5.8L5.8 -4.2L4.0 -2.3ZM2.6 0A2.6 2.6 0 1 0 -2.6 0A2.6 2.6 0 1 0 2.6 0Z" fill="#c4c5c9" fill-rule="evenodd"/></g>
<g transform="translate(135.5 607)"><path d="M4.4 -1.2L7.1 -1.1L7.1 1.1L4.4 1.2L4.0 2.3L5.8 4.2L4.2 5.8L2.3 4.0L1.2 4.4L1.1 7.1L-1.1 7.1L-1.2 4.4L-2.3 4.0L-4.2 5.8L-5.8 4.2L-4.0 2.3L-4.4 1.2L-7.1 1.1L-7.1 -1.1L-4.4 -1.2L-4.0 -2.3L-5.8 -4.2L-4.2 -5.8L-2.3 -4.0L-1.2 -4.4L-1.1 -7.1L1.1 -7.1L1.2 -4.4L2.3 -4.0L4.2 -5.8L5.8 -4.2L4.0 -2.3ZM2.6 0A2.6 2.6 0 1 0 -2.6 0A2.6 2.6 0 1 0 2.6 0Z" fill="#c4c5c9" fill-rule="evenodd"/></g>
<path d="M253.5 198V218" stroke="#23262e" stroke-width="1.2"/><path d="M255.8 204.6H263.6L259.7 209.4Z" fill="#23262e"/>
<path d="M429 973.6V984.4M423.6 979H434.4" stroke="#7a7c84" stroke-width="3.4"/><path d="M429 974.6V983.4M424.6 979H433.4" stroke="#ebecf0" stroke-width="1.4"/>
<g id="sbicons"><rect x="9.8" y="997.8" width="15.4" height="15.4" fill="#ebecf0" stroke="#4a4a4a" stroke-width="1.8"/><rect x="9.8" y="997.8" width="5.2" height="15.4" fill="#4a4a4a"/><rect x="1894.8" y="997.8" width="15.4" height="15.4" fill="#ebecf0" stroke="#4a4a4a" stroke-width="1.8"/><rect x="1905" y="997.8" width="5.2" height="15.4" fill="#4a4a4a"/><path d="M1351 1004V1001.4C1351 997.4 1357 997.4 1357 1001.4V1004" fill="none" stroke="#b5b6bb" stroke-width="1.3"/><rect x="1348.6" y="1004" width="10.8" height="8.6" rx="1.2" fill="#f4f4f6" stroke="#b5b6bb" stroke-width="1.3"/></g>
<g transform="translate(23 631)"><circle cx="-0.6" cy="0" r="8.4" fill="none" stroke="#141414" stroke-width="1.1"/><path d="M0 0.2H10.4" stroke="#141414" stroke-width="1.2"/><rect x="-2.4" y="-1.8" width="3.6" height="3.6" fill="#fff" stroke="#141414" stroke-width="1.2"/></g>
<g transform="translate(68 631)"><path d="M-6.4 -6.4C-3 -8 3 -8 6.4 -6.4L1.6 -0.4V6.6L-1.6 7.4V-0.4Z" fill="#8f9194" stroke="#2a2a2a" stroke-width="1.1"/><ellipse cx="0" cy="-6.4" rx="6.2" ry="1.5" fill="#d9dadd" stroke="#2a2a2a" stroke-width=".8"/><path d="M6.6 -9.6H9.6V-7M-9 5.4V8.4H-6" fill="none" stroke="#141414" stroke-width="1.1" stroke-dasharray="2 1.2"/></g>
<path d="M7.6 658.8L11 662.6L18 653.6" fill="none" stroke="#636468" stroke-width="2"/>
<path d="M7.6 718.8L11 722.6L18 713.6" fill="none" stroke="#636468" stroke-width="2"/>
<path d="M7.6 738.8L11 742.6L18 733.6" fill="none" stroke="#636468" stroke-width="2"/>
<path d="M7.6 758.8L11 762.6L18 753.6" fill="none" stroke="#636468" stroke-width="2"/>
<path d="M7.6 818.8L11 822.6L18 813.6" fill="none" stroke="#636468" stroke-width="2"/>
<path d="M7.6 899.8L11 903.6L18 894.6" fill="none" stroke="#1d1d1d" stroke-width="2"/>
<g transform="translate(1625 239.2)"><g transform="scale(0.8)"><path d="M-10.9 -10.9L11 -6.5V5.5Q5 10 -2.4 11.9L-10.9 1.3Z" fill="#0b0b0b" stroke="#0b0b0b" stroke-width="1" stroke-linejoin="round"/><path d="M-10 -9.5L9.9 -5.4Q4 -1.6 -2.1 -0.1Z" fill="#ff8c5a"/><path d="M-10 -9.5L-2.1 -0.1V3.8L-10 -6.1Z" fill="#ff4a00"/><path d="M-10 -6.1L-2.1 3.8V7.7L-10 -1.9Z" fill="#fff"/><path d="M-10 -1.9L-2.1 7.7V11L-10 0.8Z" fill="#6a8aff"/><path d="M-2.1 -0.1Q4 -1.6 9.9 -5.4V-1.2Q4 2.4 -2.1 3.8Z" fill="#d60000"/><path d="M-2.1 3.8Q4 2.4 9.9 -1.2V2.7Q4 6.2 -2.1 7.7Z" fill="#c2c3c5"/><path d="M-2.1 7.7Q4 6.2 9.9 2.7V5Q4 9.4 -2.1 11Z" fill="#0c1f8e"/></g><path d="M5.2 1.6V9.6M1.2 5.6H9.2" stroke="#fff" stroke-width="4"/><path d="M5.2 2.2V9M1.8 5.6H8.6" stroke="#111" stroke-width="2"/></g>
<g transform="translate(1649.5 235.2)"><g transform="scale(0.5)"><path d="M-10.9 -10.9L11 -6.5V5.5Q5 10 -2.4 11.9L-10.9 1.3Z" fill="#0b0b0b" stroke="#0b0b0b" stroke-width="1" stroke-linejoin="round"/><path d="M-10 -9.5L9.9 -5.4Q4 -1.6 -2.1 -0.1Z" fill="#ff8c5a"/><path d="M-10 -9.5L-2.1 -0.1V3.8L-10 -6.1Z" fill="#ff4a00"/><path d="M-10 -6.1L-2.1 3.8V7.7L-10 -1.9Z" fill="#fff"/><path d="M-10 -1.9L-2.1 7.7V11L-10 0.8Z" fill="#6a8aff"/><path d="M-2.1 -0.1Q4 -1.6 9.9 -5.4V-1.2Q4 2.4 -2.1 3.8Z" fill="#d60000"/><path d="M-2.1 3.8Q4 2.4 9.9 -1.2V2.7Q4 6.2 -2.1 7.7Z" fill="#c2c3c5"/><path d="M-2.1 7.7Q4 6.2 9.9 2.7V5Q4 9.4 -2.1 11Z" fill="#0c1f8e"/></g></g>
<g transform="translate(1657.5 242.6)"><g transform="scale(0.5)"><path d="M-10.9 -10.9L11 -6.5V5.5Q5 10 -2.4 11.9L-10.9 1.3Z" fill="#0b0b0b" stroke="#0b0b0b" stroke-width="1" stroke-linejoin="round"/><path d="M-10 -9.5L9.9 -5.4Q4 -1.6 -2.1 -0.1Z" fill="#ff8c5a"/><path d="M-10 -9.5L-2.1 -0.1V3.8L-10 -6.1Z" fill="#ff4a00"/><path d="M-10 -6.1L-2.1 3.8V7.7L-10 -1.9Z" fill="#fff"/><path d="M-10 -1.9L-2.1 7.7V11L-10 0.8Z" fill="#6a8aff"/><path d="M-2.1 -0.1Q4 -1.6 9.9 -5.4V-1.2Q4 2.4 -2.1 3.8Z" fill="#d60000"/><path d="M-2.1 3.8Q4 2.4 9.9 -1.2V2.7Q4 6.2 -2.1 7.7Z" fill="#c2c3c5"/><path d="M-2.1 7.7Q4 6.2 9.9 2.7V5Q4 9.4 -2.1 11Z" fill="#0c1f8e"/></g></g>
<path d="M1647 240V246.6H1650.6M1649 244.6L1651.4 246.6L1649 248.6" stroke="#111" stroke-width="1.1" fill="none"/>
<path d="M1672.6 232L1687.6 246.6M1687.6 232L1672.6 246.6" stroke="#d80000" stroke-width="3"/>
<path d="M1711.6 232.6A8 8 0 1 0 1713.6 244.6" stroke="#111" stroke-width="1.3" fill="none"/><path d="M1709.6 230L1713.6 233L1709.4 235.6Z" fill="#111"/><g transform="translate(1709.4 241.2)"><g transform="scale(0.66)"><path d="M-10.9 -10.9L11 -6.5V5.5Q5 10 -2.4 11.9L-10.9 1.3Z" fill="#0b0b0b" stroke="#0b0b0b" stroke-width="1" stroke-linejoin="round"/><path d="M-10 -9.5L9.9 -5.4Q4 -1.6 -2.1 -0.1Z" fill="#ff8c5a"/><path d="M-10 -9.5L-2.1 -0.1V3.8L-10 -6.1Z" fill="#ff4a00"/><path d="M-10 -6.1L-2.1 3.8V7.7L-10 -1.9Z" fill="#fff"/><path d="M-10 -1.9L-2.1 7.7V11L-10 0.8Z" fill="#6a8aff"/><path d="M-2.1 -0.1Q4 -1.6 9.9 -5.4V-1.2Q4 2.4 -2.1 3.8Z" fill="#d60000"/><path d="M-2.1 3.8Q4 2.4 9.9 -1.2V2.7Q4 6.2 -2.1 7.7Z" fill="#c2c3c5"/><path d="M-2.1 7.7Q4 6.2 9.9 2.7V5Q4 9.4 -2.1 11Z" fill="#0c1f8e"/></g></g>
<path d="M1727.6 242.4L1735 233.6L1742.6 242.4Z" fill="#dcdde0" stroke="#9fa1a6" stroke-width="1.1" stroke-linejoin="round"/><path d="M1755.2 234.6H1770.6L1763 243.6Z" fill="#dcdde0" stroke="#9fa1a6" stroke-width="1.1" stroke-linejoin="round"/>
<path d="M1784.2 239.2L1794.4 230.6V247.6Z" fill="url(#gred)" stroke="#5a0c00" stroke-width=".8" stroke-linejoin="round"/>
<g transform="translate(1817 239.2)"><path d="M-7.4 -6.6C-4 -8.4 4 -8.4 7.4 -6.6L1.8 0V7L-1.8 8V0Z" fill="url(#gfun)" stroke="#10207a" stroke-width="1"/><ellipse cx="0" cy="-6.6" rx="7.2" ry="1.7" fill="#6a88f2" stroke="#10207a" stroke-width=".9"/></g>
<rect x="1837.4" y="230.6" width="14" height="17" fill="#f4f4f6" stroke="#3a3a3a" stroke-width="1"/><rect x="1837.4" y="230.6" width="14" height="3" fill="#4a4a4a"/><path d="M1842 233.6V247.6M1846.8 233.6V247.6M1837.4 238.2H1851.4M1837.4 242.8H1851.4" stroke="#4a4a4a" stroke-width=".9"/>
<path d="M1865.4 232.6H1880.4M1865.4 239.4H1880.4M1865.4 246.2H1880.4" stroke="#111" stroke-width="2" stroke-linecap="round"/>
<g transform="translate(1904.6 240.2)"><g transform="scale(0.8)"><path d="M-10.9 -10.9L11 -6.5V5.5Q5 10 -2.4 11.9L-10.9 1.3Z" fill="#0b0b0b" stroke="#0b0b0b" stroke-width="1" stroke-linejoin="round"/><path d="M-10 -9.5L9.9 -5.4Q4 -1.6 -2.1 -0.1Z" fill="#ff8c5a"/><path d="M-10 -9.5L-2.1 -0.1V3.8L-10 -6.1Z" fill="#ff4a00"/><path d="M-10 -6.1L-2.1 3.8V7.7L-10 -1.9Z" fill="#fff"/><path d="M-10 -1.9L-2.1 7.7V11L-10 0.8Z" fill="#6a8aff"/><path d="M-2.1 -0.1Q4 -1.6 9.9 -5.4V-1.2Q4 2.4 -2.1 3.8Z" fill="#d60000"/><path d="M-2.1 3.8Q4 2.4 9.9 -1.2V2.7Q4 6.2 -2.1 7.7Z" fill="#c2c3c5"/><path d="M-2.1 7.7Q4 6.2 9.9 2.7V5Q4 9.4 -2.1 11Z" fill="#0c1f8e"/></g></g>
<g transform="translate(1625.2 266.8)"><circle r="9" fill="url(#ghelp2)" stroke="#1a2a9a" stroke-width=".7"/><text x="0" y="5.6" text-anchor="middle" style="font-family:Liberation Serif,serif" font-weight="700" font-size="16px" fill="#fff">?</text></g>
<circle cx="1625" cy="301" r="4.6" fill="none" stroke="#2a2a2a" stroke-width="1.2"/><path d="M1628.4 304.4L1632.4 308.4" stroke="#2a2a2a" stroke-width="1.3"/>
<g transform="translate(1904.7 285)"><path d="M-0.16 -8.00A8 8 0 0 1 2.89 -7.46L1.37 -3.54A3.8 3.8 0 0 0 -0.08 -3.80Z" fill="#ff2a00"/><path d="M2.59 -7.57A8 8 0 0 1 5.26 -6.02L2.50 -2.86A3.8 3.8 0 0 0 1.23 -3.60Z" fill="#ff7f00"/><path d="M5.02 -6.23A8 8 0 0 1 7.01 -3.86L3.33 -1.83A3.8 3.8 0 0 0 2.38 -2.96Z" fill="#ffd400"/><path d="M6.85 -4.14A8 8 0 0 1 7.90 -1.23L3.75 -0.58A3.8 3.8 0 0 0 3.25 -1.97Z" fill="#d4ff00"/><path d="M7.85 -1.55A8 8 0 0 1 7.85 1.55L3.73 0.73A3.8 3.8 0 0 0 3.73 -0.73Z" fill="#7fff00"/><path d="M7.90 1.23A8 8 0 0 1 6.85 4.14L3.25 1.97A3.8 3.8 0 0 0 3.75 0.58Z" fill="#2aff00"/><path d="M7.01 3.86A8 8 0 0 1 5.02 6.23L2.38 2.96A3.8 3.8 0 0 0 3.33 1.83Z" fill="#00ff2a"/><path d="M5.26 6.02A8 8 0 0 1 2.59 7.57L1.23 3.60A3.8 3.8 0 0 0 2.50 2.86Z" fill="#00ff7f"/><path d="M2.89 7.46A8 8 0 0 1 -0.16 8.00L-0.08 3.80A3.8 3.8 0 0 0 1.37 3.54Z" fill="#00ffd4"/><path d="M0.16 8.00A8 8 0 0 1 -2.89 7.46L-1.37 3.54A3.8 3.8 0 0 0 0.08 3.80Z" fill="#00d4ff"/><path d="M-2.59 7.57A8 8 0 0 1 -5.26 6.02L-2.50 2.86A3.8 3.8 0 0 0 -1.23 3.60Z" fill="#007fff"/><path d="M-5.02 6.23A8 8 0 0 1 -7.01 3.86L-3.33 1.83A3.8 3.8 0 0 0 -2.38 2.96Z" fill="#002aff"/><path d="M-6.85 4.14A8 8 0 0 1 -7.90 1.23L-3.75 0.58A3.8 3.8 0 0 0 -3.25 1.97Z" fill="#2a00ff"/><path d="M-7.85 1.55A8 8 0 0 1 -7.85 -1.55L-3.73 -0.73A3.8 3.8 0 0 0 -3.73 0.73Z" fill="#7f00ff"/><path d="M-7.90 -1.23A8 8 0 0 1 -6.85 -4.14L-3.25 -1.97A3.8 3.8 0 0 0 -3.75 -0.58Z" fill="#d400ff"/><path d="M-7.01 -3.86A8 8 0 0 1 -5.02 -6.23L-2.38 -2.96A3.8 3.8 0 0 0 -3.33 -1.83Z" fill="#ff00d4"/><path d="M-5.26 -6.02A8 8 0 0 1 -2.59 -7.57L-1.23 -3.60A3.8 3.8 0 0 0 -2.50 -2.86Z" fill="#ff007f"/><path d="M-2.89 -7.46A8 8 0 0 1 0.16 -8.00L0.08 -3.80A3.8 3.8 0 0 0 -1.37 -3.54Z" fill="#ff002a"/><circle r="8.2" fill="none" stroke="#141414" stroke-width="1.2"/><circle r="3.9" fill="#f7f7f7"/></g>
<rect x="1896.4" y="322.4" width="16.8" height="12" fill="url(#gmon)" stroke="#141414" stroke-width="1.6"/><path d="M1902 336H1908V337.6H1902Z M1900 337.6H1910" stroke="#141414" stroke-width="1.4"/>
<rect x="1896.2" y="366.6" width="17" height="16.4" fill="#e9ecff" stroke="#141414" stroke-width="1"/><rect x="1896.2" y="366.6" width="17" height="2.4" fill="#2a3ab0"/><g transform="translate(1904.7 376.2)"><ellipse rx="7" ry="5.6" fill="#3a54d8"/><text y="4.4" text-anchor="middle" style="font-family:Liberation Serif,serif" font-weight="700" font-size="12px" fill="#fff">?</text></g>
<path d="M1896 417.6H1899.6L1901.4 414.2H1908.4L1910 417.6H1913.6V426.4H1896Z" fill="#2a2a2a" stroke="#0a0a0a" stroke-width="1"/><circle cx="1905.4" cy="421.4" r="3.6" fill="#1a1a1a" stroke="#8a8a8a" stroke-width="1"/><circle cx="1904.6" cy="420.6" r="1.1" fill="#5a8aff"/>
<rect x="1896.4" y="457" width="16.4" height="15.4" fill="#d9dade" stroke="#141414" stroke-width="1"/><path d="M1900.5 457V472.4M1904.6 457V472.4M1908.7 457V472.4M1896.4 460.8H1912.8M1896.4 464.6H1912.8M1896.4 468.4H1912.8" stroke="#555" stroke-width=".7"/><path d="M1904.6 464.6H1912.8" stroke="#e01a1a" stroke-width="1.2"/><path d="M1904.6 464.6V457" stroke="#12a01a" stroke-width="1.2"/><path d="M1896.4 457.4H1900" stroke="#1a2a9a" stroke-width="1.4"/>
<path d="M1896 509.4L1905 505.2L1913.8 509.4L1905 513.4Z" fill="#0c0c0c"/><path d="M1900 512V515C1903 517 1907 517 1910 515V512L1905 514.4Z" fill="#0c0c0c"/><path d="M1898 510.4V516" stroke="#0c0c0c" stroke-width="1"/>
<path d="M1716.4 363.2L1721.6 368.3L1732.8 357" fill="none" stroke="#2c2c2c" stroke-width="1.9"/>
<g transform="translate(1749.4 388.2) scale(0.98)"><path d="M-2.2 5.4V2.6C-2.2 0.4 -5.2 -1.2 -5.2 -4C-5.2 -6.8 -3 -8.4 0 -8.4C3 -8.4 5.2 -6.8 5.2 -4C5.2 -1.2 2.2 0.4 2.2 2.6V5.4C2.2 6.6 -2.2 6.6 -2.2 5.4Z" fill="#ffd90a" stroke="#8a6a00" stroke-width="1" stroke-linejoin="round" /><path d="M-1.8 4.2H1.8M-1.6 5.6H1.6" fill="none" stroke="#b85a00" stroke-width="1.3" stroke-linejoin="round" /></g>
<g transform="translate(1774.4 388.2)"><path d="M1.6 -2.6V-5C1.6 -9 7.8 -9 7.8 -5V-3.4" fill="none" stroke="#5a5a5a" stroke-width="1.5" stroke-linejoin="round" /><rect x="-6" y="-2.6" width="10.4" height="8.6" rx="1" fill="url(#gyl)" stroke="#9a8a3a" stroke-width="1"/></g>
<g transform="translate(1749.4 412.0) scale(0.98)"><path d="M-2.2 5.4V2.6C-2.2 0.4 -5.2 -1.2 -5.2 -4C-5.2 -6.8 -3 -8.4 0 -8.4C3 -8.4 5.2 -6.8 5.2 -4C5.2 -1.2 2.2 0.4 2.2 2.6V5.4C2.2 6.6 -2.2 6.6 -2.2 5.4Z" fill="#ffd90a" stroke="#8a6a00" stroke-width="1" stroke-linejoin="round" /><path d="M-1.8 4.2H1.8M-1.6 5.6H1.6" fill="none" stroke="#b85a00" stroke-width="1.3" stroke-linejoin="round" /></g>
<g transform="translate(1774.4 412.0)"><path d="M1.6 -2.6V-5C1.6 -9 7.8 -9 7.8 -5V-3.4" fill="none" stroke="#5a5a5a" stroke-width="1.5" stroke-linejoin="round" /><rect x="-6" y="-2.6" width="10.4" height="8.6" rx="1" fill="url(#gyl)" stroke="#9a8a3a" stroke-width="1"/></g>
<g transform="translate(1749.4 435.8) scale(0.98)"><path d="M-2.2 5.4V2.6C-2.2 0.4 -5.2 -1.2 -5.2 -4C-5.2 -6.8 -3 -8.4 0 -8.4C3 -8.4 5.2 -6.8 5.2 -4C5.2 -1.2 2.2 0.4 2.2 2.6V5.4C2.2 6.6 -2.2 6.6 -2.2 5.4Z" fill="#ffd90a" stroke="#8a6a00" stroke-width="1" stroke-linejoin="round" /><path d="M-1.8 4.2H1.8M-1.6 5.6H1.6" fill="none" stroke="#b85a00" stroke-width="1.3" stroke-linejoin="round" /></g>
<g transform="translate(1774.4 435.8)"><path d="M1.6 -2.6V-5C1.6 -9 7.8 -9 7.8 -5V-3.4" fill="none" stroke="#5a5a5a" stroke-width="1.5" stroke-linejoin="round" /><rect x="-6" y="-2.6" width="10.4" height="8.6" rx="1" fill="url(#gyl)" stroke="#9a8a3a" stroke-width="1"/></g>
<g transform="translate(1749.4 459.59999999999997) scale(0.98)"><path d="M-2.2 5.4V2.6C-2.2 0.4 -5.2 -1.2 -5.2 -4C-5.2 -6.8 -3 -8.4 0 -8.4C3 -8.4 5.2 -6.8 5.2 -4C5.2 -1.2 2.2 0.4 2.2 2.6V5.4C2.2 6.6 -2.2 6.6 -2.2 5.4Z" fill="#ffd90a" stroke="#8a6a00" stroke-width="1" stroke-linejoin="round" /><path d="M-1.8 4.2H1.8M-1.6 5.6H1.6" fill="none" stroke="#b85a00" stroke-width="1.3" stroke-linejoin="round" /></g>
<g transform="translate(1774.4 459.59999999999997)"><path d="M1.6 -2.6V-5C1.6 -9 7.8 -9 7.8 -5V-3.4" fill="none" stroke="#5a5a5a" stroke-width="1.5" stroke-linejoin="round" /><rect x="-6" y="-2.6" width="10.4" height="8.6" rx="1" fill="url(#gyl)" stroke="#9a8a3a" stroke-width="1"/></g>
<g transform="translate(1749.4 483.4) scale(0.98)"><path d="M-2.2 5.4V2.6C-2.2 0.4 -5.2 -1.2 -5.2 -4C-5.2 -6.8 -3 -8.4 0 -8.4C3 -8.4 5.2 -6.8 5.2 -4C5.2 -1.2 2.2 0.4 2.2 2.6V5.4C2.2 6.6 -2.2 6.6 -2.2 5.4Z" fill="#ffd90a" stroke="#8a6a00" stroke-width="1" stroke-linejoin="round" /><path d="M-1.8 4.2H1.8M-1.6 5.6H1.6" fill="none" stroke="#b85a00" stroke-width="1.3" stroke-linejoin="round" /></g>
<g transform="translate(1774.4 483.4)"><path d="M1.6 -2.6V-5C1.6 -9 7.8 -9 7.8 -5V-3.4" fill="none" stroke="#5a5a5a" stroke-width="1.5" stroke-linejoin="round" /><rect x="-6" y="-2.6" width="10.4" height="8.6" rx="1" fill="url(#gyl)" stroke="#9a8a3a" stroke-width="1"/></g>
<g transform="translate(1749.4 507.2) scale(0.98)"><path d="M-2.2 5.4V2.6C-2.2 0.4 -5.2 -1.2 -5.2 -4C-5.2 -6.8 -3 -8.4 0 -8.4C3 -8.4 5.2 -6.8 5.2 -4C5.2 -1.2 2.2 0.4 2.2 2.6V5.4C2.2 6.6 -2.2 6.6 -2.2 5.4Z" fill="#ffd90a" stroke="#8a6a00" stroke-width="1" stroke-linejoin="round" /><path d="M-1.8 4.2H1.8M-1.6 5.6H1.6" fill="none" stroke="#b85a00" stroke-width="1.3" stroke-linejoin="round" /></g>
<g transform="translate(1774.4 507.2)"><path d="M1.6 -2.6V-5C1.6 -9 7.8 -9 7.8 -5V-3.4" fill="none" stroke="#5a5a5a" stroke-width="1.5" stroke-linejoin="round" /><rect x="-6" y="-2.6" width="10.4" height="8.6" rx="1" fill="url(#gyl)" stroke="#9a8a3a" stroke-width="1"/></g>
<rect x="1790.9" y="355.0" width="17.2" height="15.8" fill="#2bff00" stroke="#121212" stroke-width="1.5"/><circle cx="1822.4" cy="363.1" r="7.8" fill="#fff" stroke="#333" stroke-width="1.1"/><rect x="1790.9" y="378.8" width="17.2" height="15.8" fill="#ff0a00" stroke="#121212" stroke-width="1.5"/><circle cx="1822.4" cy="386.9" r="7.8" fill="#fff" stroke="#333" stroke-width="1.1"/><rect x="1790.9" y="402.6" width="17.2" height="15.8" fill="#000" stroke="#121212" stroke-width="1.5"/><circle cx="1822.4" cy="410.7" r="7.8" fill="#fff" stroke="#333" stroke-width="1.1"/><rect x="1790.9" y="426.4" width="17.2" height="15.8" fill="#000" stroke="#121212" stroke-width="1.5"/><circle cx="1822.4" cy="434.5" r="7.8" fill="#fff" stroke="#333" stroke-width="1.1"/><rect x="1790.9" y="450.2" width="17.2" height="15.8" fill="#000" stroke="#121212" stroke-width="1.5"/><circle cx="1822.4" cy="458.3" r="7.8" fill="#fff" stroke="#333" stroke-width="1.1"/><rect x="1790.9" y="474.0" width="17.2" height="15.8" fill="#8f8f8f" stroke="#121212" stroke-width="1.5"/><circle cx="1822.4" cy="482.1" r="7.8" fill="#fff" stroke="#333" stroke-width="1.1"/><rect x="1790.9" y="497.8" width="17.2" height="15.8" fill="#8f8f8f" stroke="#121212" stroke-width="1.5"/><circle cx="1822.4" cy="505.9" r="7.8" fill="#fff" stroke="#333" stroke-width="1.1"/><path d="M1619.4 414.4H1627.0V406.8Z" fill="#1d1d1d"/><path d="M1639.2 438.2H1646.8V430.6Z" fill="#1d1d1d"/><path d="M1639.2 485.8H1646.8V478.2Z" fill="#1d1d1d"/></svg>
</div>
</body></html>
